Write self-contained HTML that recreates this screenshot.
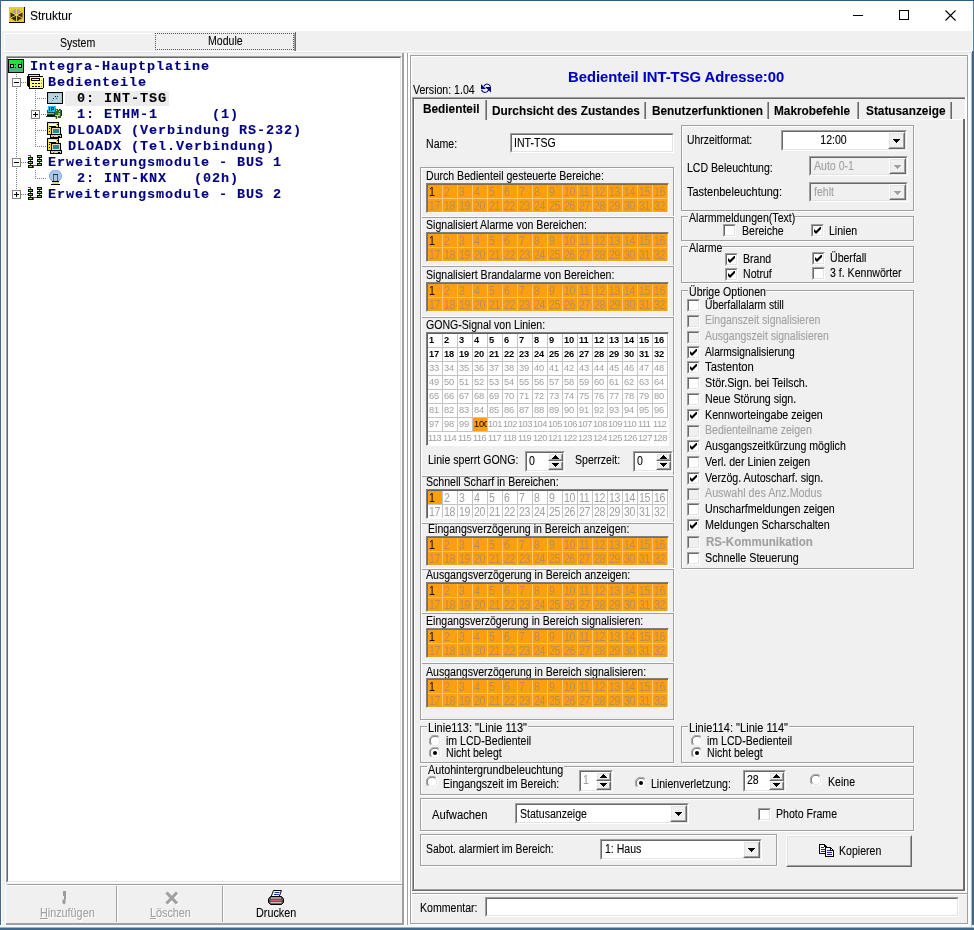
<!DOCTYPE html>
<html><head><meta charset="utf-8"><title>Struktur</title>
<style>
html,body{margin:0;padding:0;}
body{width:974px;height:930px;overflow:hidden;background:#f0f0f0;font-family:"Liberation Sans",sans-serif;font-size:12px;position:relative;}
#w div,#w span.t,#w svg.a{position:absolute;}
#w{position:absolute;left:0;top:0;width:974px;height:930px;overflow:hidden;will-change:transform;}
.t{white-space:pre;line-height:14px;transform-origin:0 0;display:block;-webkit-text-stroke:0.1px currentColor;}
.c{box-sizing:border-box;overflow:hidden;white-space:nowrap;}
.c span{display:inline-block;transform-origin:0 100%;padding-left:1px;}
</style></head><body><div id="w">
<div class="" style="left:0px;top:0px;width:974px;height:930px;background:#f0f0f0"></div>
<div class="" style="left:0px;top:0px;width:974px;height:31px;background:#fff"></div>
<div class="" style="left:0px;top:0px;width:974px;height:1px;background:#2c5a84"></div>
<div class="" style="left:0px;top:0px;width:1px;height:930px;background:#44688a"></div>
<div class="" style="left:1px;top:31px;width:1px;height:897px;background:#fff"></div>
<div class="" style="left:972px;top:51px;width:2px;height:879px;background:#3e688c"></div>
<div class="" style="left:972px;top:1px;width:1px;height:50px;background:#f4f8fc"></div>
<div class="" style="left:973px;top:1px;width:1px;height:50px;background:#4a86b8"></div>
<div class="" style="left:0px;top:925px;width:974px;height:2px;background:#fafafa"></div>
<div class="" style="left:971px;top:51px;width:1px;height:877px;background:#a9bac9"></div>
<div class="" style="left:0px;top:927px;width:974px;height:1px;background:#9fb2c3"></div>
<div class="" style="left:0px;top:928px;width:974px;height:2px;background:#3e688c"></div>
<svg class="a" style="left:9px;top:7px" width="16" height="16" viewBox="0 0 16 16"><rect x="0" y="0" width="16" height="16" fill="#e6cf1e"/><rect x="15" y="0" width="1" height="16" fill="#000"/><rect x="0" y="15" width="16" height="1" fill="#000"/><path d="M7.500 1.500L13.500 5 7.500 8.500 1.500 5z" fill="#b8a090"/><path d="M1.500 5L7.500 8.500V14.500L1.500 11z" fill="#3a2808"/><path d="M13.500 5L7.500 8.500V14.500L13.500 11z" fill="#4a3008"/><path d="M7.500 1V15M1.500 11L13.500 5M1.500 5L13.500 11" stroke="#e8d850" stroke-width="0.900" fill="none"/></svg>
<span class="t" style="left:30px;top:9px;font-size:12px;color:#000;transform:scaleX(1);">Struktur</span>
<div class="" style="left:853px;top:15px;width:10px;height:1px;background:#000"></div>
<div class="" style="left:899px;top:10px;width:10px;height:10px;border:1px solid #000;box-sizing:border-box"></div>
<svg class="a" style="left:945px;top:10px" width="11" height="11" viewBox="0 0 11 11"><path d="M0.5 0.5l10 10M10.5 0.5l-10 10" stroke="#000" stroke-width="1.1" fill="none"/></svg>
<span class="t" style="left:60px;top:36px;font-size:12px;color:#000;transform:scaleX(0.88);">System</span>
<div class="" style="left:155px;top:33px;width:139px;height:17px;border:1px dotted #555;box-sizing:border-box"></div>
<div class="" style="left:295px;top:32px;width:1px;height:19px;background:#696969"></div>
<div class="" style="left:294px;top:33px;width:1px;height:18px;background:#a0a0a0"></div>
<span class="t" style="left:208px;top:34px;font-size:12px;color:#000;transform:scaleX(0.88);">Module</span>
<div class="" style="left:4px;top:33px;width:150px;height:1px;background:#fff"></div>
<div class="" style="left:4px;top:33px;width:1px;height:18px;background:#fff"></div>
<div class="" style="left:6px;top:56px;width:396px;height:827px;background:#fff;box-sizing:border-box;border-top:1px solid #a0a0a0;border-left:1px solid #a0a0a0;border-right:1px solid #fff;border-bottom:1px solid #fff"></div>
<div class="" style="left:7px;top:57px;width:394px;height:825px;box-sizing:border-box;border-top:1px solid #696969;border-left:1px solid #696969;border-right:1px solid #e3e3e3;border-bottom:1px solid #e3e3e3"></div>
<div class="" style="left:65px;top:91px;width:104px;height:15px;background:#ececec"></div>
<span class="t" style="left:30px;top:59px;font-size:13.5px;color:#000080;font-weight:700;font-family:'Liberation Mono',monospace;transform:scaleX(1);line-height:16px;letter-spacing:0.9px;">Integra-Hauptplatine</span>
<span class="t" style="left:48px;top:75px;font-size:13.5px;color:#000080;font-weight:700;font-family:'Liberation Mono',monospace;transform:scaleX(1);line-height:16px;letter-spacing:0.9px;">Bedienteile</span>
<span class="t" style="left:77px;top:91px;font-size:13.5px;color:#000;font-weight:700;font-family:'Liberation Mono',monospace;transform:scaleX(1);line-height:16px;letter-spacing:0.9px;">0: INT-TSG</span>
<span class="t" style="left:77px;top:107px;font-size:13.5px;color:#000080;font-weight:700;font-family:'Liberation Mono',monospace;transform:scaleX(1);line-height:16px;letter-spacing:0.9px;">1: ETHM-1      (1)</span>
<span class="t" style="left:68px;top:123px;font-size:13.5px;color:#000080;font-weight:700;font-family:'Liberation Mono',monospace;transform:scaleX(1);line-height:16px;letter-spacing:0.9px;">DLOADX (Verbindung RS-232)</span>
<span class="t" style="left:68px;top:139px;font-size:13.5px;color:#000080;font-weight:700;font-family:'Liberation Mono',monospace;transform:scaleX(1);line-height:16px;letter-spacing:0.9px;">DLOADX (Tel.Verbindung)</span>
<span class="t" style="left:48px;top:155px;font-size:13.5px;color:#000080;font-weight:700;font-family:'Liberation Mono',monospace;transform:scaleX(1);line-height:16px;letter-spacing:0.9px;">Erweiterungsmodule - BUS 1</span>
<span class="t" style="left:77px;top:171px;font-size:13.5px;color:#000080;font-weight:700;font-family:'Liberation Mono',monospace;transform:scaleX(1);line-height:16px;letter-spacing:0.9px;">2: INT-KNX   (02h)</span>
<span class="t" style="left:48px;top:187px;font-size:13.5px;color:#000080;font-weight:700;font-family:'Liberation Mono',monospace;transform:scaleX(1);line-height:16px;letter-spacing:0.9px;">Erweiterungsmodule - BUS 2</span>
<div class="" style="left:16px;top:74px;width:1px;height:117px;background:repeating-linear-gradient(to bottom,#808080 0,#808080 1px,transparent 1px,transparent 2px)"></div>
<div class="" style="left:21px;top:82px;width:7px;height:1px;background:repeating-linear-gradient(to right,#808080 0,#808080 1px,transparent 1px,transparent 2px)"></div>
<div class="" style="left:21px;top:162px;width:7px;height:1px;background:repeating-linear-gradient(to right,#808080 0,#808080 1px,transparent 1px,transparent 2px)"></div>
<div class="" style="left:21px;top:194px;width:7px;height:1px;background:repeating-linear-gradient(to right,#808080 0,#808080 1px,transparent 1px,transparent 2px)"></div>
<div class="" style="left:35px;top:90px;width:1px;height:57px;background:repeating-linear-gradient(to bottom,#808080 0,#808080 1px,transparent 1px,transparent 2px)"></div>
<div class="" style="left:37px;top:98px;width:9px;height:1px;background:repeating-linear-gradient(to right,#808080 0,#808080 1px,transparent 1px,transparent 2px)"></div>
<div class="" style="left:41px;top:114px;width:5px;height:1px;background:repeating-linear-gradient(to right,#808080 0,#808080 1px,transparent 1px,transparent 2px)"></div>
<div class="" style="left:37px;top:130px;width:9px;height:1px;background:repeating-linear-gradient(to right,#808080 0,#808080 1px,transparent 1px,transparent 2px)"></div>
<div class="" style="left:37px;top:146px;width:9px;height:1px;background:repeating-linear-gradient(to right,#808080 0,#808080 1px,transparent 1px,transparent 2px)"></div>
<div class="" style="left:35px;top:170px;width:1px;height:9px;background:repeating-linear-gradient(to bottom,#808080 0,#808080 1px,transparent 1px,transparent 2px)"></div>
<div class="" style="left:37px;top:178px;width:9px;height:1px;background:repeating-linear-gradient(to right,#808080 0,#808080 1px,transparent 1px,transparent 2px)"></div>
<div class="" style="left:12px;top:78px;width:9px;height:9px;background:#fff;border:1px solid #808080;box-sizing:border-box"></div>
<div class="" style="left:14px;top:82px;width:5px;height:1px;background:#000"></div>
<div class="" style="left:31px;top:110px;width:9px;height:9px;background:#fff;border:1px solid #808080;box-sizing:border-box"></div>
<div class="" style="left:33px;top:114px;width:5px;height:1px;background:#000"></div>
<div class="" style="left:35px;top:112px;width:1px;height:5px;background:#000"></div>
<div class="" style="left:12px;top:158px;width:9px;height:9px;background:#fff;border:1px solid #808080;box-sizing:border-box"></div>
<div class="" style="left:14px;top:162px;width:5px;height:1px;background:#000"></div>
<div class="" style="left:12px;top:190px;width:9px;height:9px;background:#fff;border:1px solid #808080;box-sizing:border-box"></div>
<div class="" style="left:14px;top:194px;width:5px;height:1px;background:#000"></div>
<div class="" style="left:16px;top:192px;width:1px;height:5px;background:#000"></div>
<svg class="a" style="left:8px;top:59px" width="16" height="14" viewBox="0 0 16 14" shape-rendering="crispEdges"><rect x="0" y="0" width="16" height="14" fill="#000"/><rect x="1" y="1" width="14" height="8" fill="#22e040"/><rect x="1" y="9" width="14" height="4" fill="#48b880"/><rect x="2" y="5" width="4" height="4" fill="#000"/><rect x="3" y="6" width="2" height="2" fill="#a0d8a0"/><rect x="10" y="5" width="4" height="4" fill="#000"/><rect x="11" y="6" width="2" height="2" fill="#a0d8a0"/><rect x="7" y="5" width="1" height="1" fill="#000"/><rect x="7" y="8" width="1" height="1" fill="#000"/><rect x="13" y="2" width="1" height="3" fill="#c03010"/></svg>
<svg class="a" style="left:27px;top:74px" width="17" height="16" viewBox="0 0 17 16" shape-rendering="crispEdges"><rect x="1" y="0" width="12" height="13" fill="#000"/><rect x="2" y="1" width="10" height="11" fill="#f4f49a"/><rect x="0" y="2" width="1" height="10" fill="#000"/><rect x="2" y="2" width="14" height="13" fill="#000"/><rect x="3" y="3" width="12" height="11" fill="#ffff8c"/><rect x="15" y="3" width="1" height="1" fill="#ffff8c"/><rect x="16" y="4" width="1" height="10" fill="#000"/><rect x="15" y="4" width="1" height="10" fill="#ffff8c"/><rect x="4" y="4" width="9" height="3" fill="#000"/><rect x="5" y="5" width="7" height="1" fill="#ffff8c"/><rect x="5" y="9" width="2" height="1" fill="#000"/><rect x="8" y="9" width="2" height="1" fill="#000"/><rect x="11" y="9" width="2" height="1" fill="#000"/><rect x="5" y="12" width="2" height="1" fill="#000"/><rect x="8" y="12" width="2" height="1" fill="#000"/><rect x="11" y="12" width="2" height="1" fill="#000"/><rect x="14" y="6" width="1" height="1" fill="#a09820"/><rect x="14" y="9" width="1" height="1" fill="#a09820"/><rect x="14" y="12" width="1" height="1" fill="#a09820"/></svg>
<svg class="a" style="left:47px;top:92px" width="16" height="12" viewBox="0 0 16 12" shape-rendering="crispEdges"><rect x="0" y="0" width="16" height="12" fill="#000"/><rect x="1" y="1" width="14" height="10" fill="#a9c4cc"/><rect x="2" y="2" width="12" height="8" fill="#b8d4dc"/><rect x="8" y="4" width="1" height="1" fill="#000"/><rect x="10" y="4" width="1" height="1" fill="#204060"/><rect x="6" y="6" width="1" height="1" fill="#000"/><rect x="9" y="6" width="1" height="1" fill="#406080"/><rect x="5" y="8" width="1" height="1" fill="#6090a0"/></svg>
<svg class="a" style="left:46px;top:106px" width="17" height="14" viewBox="0 0 17 14" shape-rendering="crispEdges"><rect x="1" y="4" width="13" height="7" fill="#205030"/><rect x="2" y="0" width="8" height="6" fill="#20c8e8"/><rect x="3" y="1" width="1" height="4" fill="#003080"/><rect x="5" y="1" width="1" height="4" fill="#003080"/><rect x="6" y="1" width="2" height="1" fill="#003080"/><rect x="7" y="2" width="1" height="1" fill="#003080"/><rect x="6" y="3" width="2" height="1" fill="#003080"/><rect x="1" y="7" width="7" height="1" fill="#90b098"/><rect x="1" y="9" width="8" height="1" fill="#000"/><rect x="9" y="3" width="6" height="9" fill="#306838"/><rect x="10" y="4" width="1" height="1" fill="#c8e860"/><rect x="12" y="3" width="1" height="1" fill="#c8e860"/><rect x="13" y="5" width="1" height="1" fill="#c8e860"/><rect x="9" y="9" width="3" height="4" fill="#d8e040"/><rect x="10" y="10" width="1" height="3" fill="#405020"/><rect x="12" y="7" width="2" height="3" fill="#98d048"/><rect x="15" y="4" width="1" height="6" fill="#183820"/><rect x="0" y="10" width="10" height="1" fill="#102818"/></svg>
<svg class="a" style="left:46px;top:122px" width="16" height="16" viewBox="0 0 16 16" shape-rendering="crispEdges"><rect x="1" y="0" width="12" height="13" fill="#000"/><rect x="2" y="1" width="10" height="11" fill="#f0e040"/><rect x="3" y="2" width="7" height="2" fill="#fff"/><rect x="3" y="4" width="7" height="1" fill="#000"/><rect x="11" y="2" width="1" height="1" fill="#000"/><rect x="3" y="6" width="1" height="1" fill="#000"/><rect x="3" y="9" width="1" height="1" fill="#000"/><rect x="5" y="5" width="10" height="8" fill="#000"/><rect x="6" y="6" width="8" height="6" fill="#d8d8c0"/><rect x="7" y="7" width="6" height="4" fill="#209090"/><rect x="4" y="12" width="12" height="4" fill="#000"/><rect x="5" y="13" width="10" height="2" fill="#d0d0b8"/><rect x="7" y="14" width="1" height="1" fill="#c04040"/><rect x="12" y="14" width="2" height="1" fill="#000"/></svg>
<svg class="a" style="left:46px;top:138px" width="16" height="16" viewBox="0 0 16 16" shape-rendering="crispEdges"><rect x="1" y="0" width="12" height="13" fill="#000"/><rect x="2" y="1" width="10" height="11" fill="#f0e040"/><rect x="3" y="2" width="7" height="2" fill="#fff"/><rect x="3" y="4" width="7" height="1" fill="#000"/><rect x="11" y="2" width="1" height="1" fill="#000"/><rect x="3" y="6" width="1" height="1" fill="#000"/><rect x="3" y="9" width="1" height="1" fill="#000"/><rect x="5" y="5" width="10" height="8" fill="#000"/><rect x="6" y="6" width="8" height="6" fill="#d8d8c0"/><rect x="7" y="7" width="6" height="4" fill="#209090"/><rect x="4" y="12" width="12" height="4" fill="#000"/><rect x="5" y="13" width="10" height="2" fill="#d0d0b8"/><rect x="7" y="14" width="1" height="1" fill="#c04040"/><rect x="12" y="14" width="2" height="1" fill="#000"/></svg>
<svg class="a" style="left:27px;top:154px" width="16" height="15" viewBox="0 0 16 15" shape-rendering="crispEdges"><path d="M0.500 1.500h3v12h3v-2h3" fill="none" stroke="#d02020" stroke-width="1"/><path d="M3.500 2v10M12.500 2v9" stroke="#702020" stroke-width="1" fill="none"/><rect x="1" y="3" width="5" height="3" fill="#000"/><rect x="2" y="4" width="3" height="1" fill="#70d050"/><rect x="1" y="7" width="5" height="3" fill="#000"/><rect x="2" y="8" width="3" height="1" fill="#70d050"/><rect x="1" y="11" width="5" height="3" fill="#000"/><rect x="2" y="12" width="3" height="1" fill="#70d050"/><rect x="10" y="1" width="5" height="3" fill="#000"/><rect x="11" y="2" width="3" height="1" fill="#70d050"/><rect x="10" y="5" width="5" height="3" fill="#000"/><rect x="11" y="6" width="3" height="1" fill="#70d050"/><rect x="10" y="9" width="5" height="3" fill="#000"/><rect x="11" y="10" width="3" height="1" fill="#70d050"/></svg>
<svg class="a" style="left:27px;top:186px" width="16" height="15" viewBox="0 0 16 15" shape-rendering="crispEdges"><path d="M0.500 1.500h3v12h3v-2h3" fill="none" stroke="#d02020" stroke-width="1"/><path d="M3.500 2v10M12.500 2v9" stroke="#702020" stroke-width="1" fill="none"/><rect x="1" y="3" width="5" height="3" fill="#000"/><rect x="2" y="4" width="3" height="1" fill="#70d050"/><rect x="1" y="7" width="5" height="3" fill="#000"/><rect x="2" y="8" width="3" height="1" fill="#70d050"/><rect x="1" y="11" width="5" height="3" fill="#000"/><rect x="2" y="12" width="3" height="1" fill="#70d050"/><rect x="10" y="1" width="5" height="3" fill="#000"/><rect x="11" y="2" width="3" height="1" fill="#70d050"/><rect x="10" y="5" width="5" height="3" fill="#000"/><rect x="11" y="6" width="3" height="1" fill="#70d050"/><rect x="10" y="9" width="5" height="3" fill="#000"/><rect x="11" y="10" width="3" height="1" fill="#70d050"/></svg>
<svg class="a" style="left:48px;top:170px" width="15" height="16" viewBox="0 0 15 16"><circle cx="7.500" cy="6" r="6" fill="#a8c8ec" stroke="#88a8d0" stroke-width="1"/><path d="M5.500 5v7M9.500 5v7" stroke="#506070" stroke-width="1" fill="none"/><rect x="5" y="4" width="5" height="1" fill="#203040"/><rect x="4" y="11" width="7" height="2" fill="#d8d8a0"/><rect x="4" y="11" width="7" height="1" fill="#000"/><rect x="4" y="13" width="7" height="1" fill="#e8e070"/><rect x="3" y="14" width="9" height="1" fill="#000"/></svg>
<div class="" style="left:7px;top:884px;width:397px;height:1px;background:#a0a0a0"></div>
<div class="" style="left:7px;top:885px;width:396px;height:1px;background:#fff"></div>
<div class="" style="left:6px;top:923px;width:398px;height:2px;background:#a0a0a0"></div>
<div class="" style="left:5px;top:53px;width:1px;height:870px;background:#fff"></div>
<div class="" style="left:116px;top:886px;width:1px;height:36px;background:#a0a0a0"></div>
<div class="" style="left:117px;top:886px;width:1px;height:36px;background:#fff"></div>
<div class="" style="left:222px;top:886px;width:1px;height:36px;background:#a0a0a0"></div>
<div class="" style="left:223px;top:886px;width:1px;height:36px;background:#fff"></div>
<span class="t" style="left:41px;top:907px;font-size:12px;color:#fff;transform:scaleX(0.9);"><u>H</u>inzufügen</span>
<span class="t" style="left:40px;top:906px;font-size:12px;color:#a0a0a0;transform:scaleX(0.9);"><u>H</u>inzufügen</span>
<span class="t" style="left:151px;top:907px;font-size:12px;color:#fff;transform:scaleX(0.9);"><u>L</u>öschen</span>
<span class="t" style="left:150px;top:906px;font-size:12px;color:#a0a0a0;transform:scaleX(0.9);"><u>L</u>öschen</span>
<span class="t" style="left:256px;top:906px;font-size:12px;color:#000;transform:scaleX(0.9);">Drucken</span>
<svg class="a" style="left:61px;top:891px" width="6" height="14" viewBox="0 0 6 14"><path d="M2 0h3v8h-0.500v4l-1.500 1.500-1.500-1.500v-3.500h1.500v-3.500h-1z" fill="#9a9a9a"/></svg>
<svg class="a" style="left:165px;top:891px" width="15" height="15" viewBox="0 0 15 15"><path d="M2.500 2.500l10.500 11M13 2.500l-10.500 11" stroke="#fff" stroke-width="3.200" fill="none"/><path d="M1.500 1.500l10.500 11M12 1.500l-10.500 11" stroke="#a0a0a0" stroke-width="3.200" fill="none"/></svg>
<svg class="a" style="left:267px;top:890px" width="18" height="16" viewBox="0 0 18 16"><path d="M6.500 0.500h8l-2.500 6.500h-8z" fill="#fff" stroke="#000" stroke-width="1"/><path d="M7.500 2.500h5M6.800 4.500h5" stroke="#2030d0" stroke-width="1.200"/><path d="M3.500 6.500h11l2 2.500v3.500l-2 2h-11l-2-2v-3.500z" fill="#505050" stroke="#000" stroke-width="1"/><path d="M4 8h10" stroke="#c8c8c8" stroke-width="1.200"/><path d="M3.500 10.500h11" stroke="#e05858" stroke-width="1.600"/><path d="M3.500 12.700h11" stroke="#d8d8d8" stroke-width="1"/></svg>
<div class="" style="left:2px;top:51px;width:970px;height:1px;background:#fff"></div>
<div class="" style="left:2px;top:52px;width:970px;height:1px;background:#e3e3e3"></div>
<div class="" style="left:402px;top:53px;width:1px;height:870px;background:#a0a0a0"></div>
<div class="" style="left:403px;top:53px;width:1px;height:870px;background:#a0a0a0"></div>
<div class="" style="left:404px;top:53px;width:3px;height:872px;background:#fff"></div>
<div class="" style="left:407px;top:53px;width:1px;height:872px;background:#a0a0a0"></div>
<div class="" style="left:408px;top:53px;width:2px;height:872px;background:#fff"></div>
<div class="" style="left:411px;top:56px;width:558px;height:869px;border:1px solid #fff;box-sizing:border-box"></div>
<div class="" style="left:410px;top:55px;width:558px;height:869px;border:1px solid #a0a0a0;box-sizing:border-box"></div>
<div class="" style="left:968px;top:53px;width:3px;height:872px;background:#fafafa"></div>
<span class="t" style="left:568px;top:68px;font-size:15px;color:#0000c0;font-weight:700;transform:scaleX(0.985);line-height:17px;">Bedienteil INT-TSG Adresse:00</span>
<span class="t" style="left:413px;top:83px;font-size:12px;color:#000;transform:scaleX(0.88);">Version: 1.04</span>
<svg class="a" style="left:481px;top:83px" width="11" height="11" viewBox="0 0 11 11"><path d="M0 1L0 6L5 6Z M4.200 4L10 4L10 9.500Z" fill="#000080"/><path d="M3 3.200C4.200 0.800 7.500 -0.300 9.600 3.800M0.400 6.800C2 10 5.500 10.600 7.600 7" stroke="#000080" stroke-width="1.100" fill="none"/></svg>
<div class="" style="left:412px;top:97px;width:553px;height:1px;background:#a0a0a0"></div>
<div class="" style="left:413px;top:98px;width:552px;height:1px;background:#696969"></div>
<div class="" style="left:412px;top:97px;width:1px;height:794px;background:#a0a0a0"></div>
<div class="" style="left:413px;top:98px;width:1px;height:793px;background:#696969"></div>
<div class="" style="left:413px;top:889px;width:552px;height:1px;background:#a0a0a0"></div>
<div class="" style="left:412px;top:890px;width:553px;height:1px;background:#696969"></div>
<div class="" style="left:963px;top:119px;width:1px;height:771px;background:#707070"></div>
<div class="" style="left:964px;top:119px;width:1px;height:772px;background:#696969"></div>
<div class="" style="left:965px;top:97px;width:2px;height:795px;background:#fff"></div>
<div class="" style="left:412px;top:891px;width:555px;height:1px;background:#fff"></div>
<div class="" style="left:414px;top:99px;width:1px;height:790px;background:#fff"></div>
<div class="" style="left:487px;top:119px;width:476px;height:1px;background:#fff"></div>
<div class="" style="left:486px;top:100px;width:1px;height:20px;background:#696969"></div>
<div class="" style="left:485px;top:100px;width:1px;height:20px;background:#a0a0a0"></div>
<span class="t" style="left:423px;top:102px;font-size:12px;color:#000;font-weight:700;transform:scaleX(0.9853);">Bedienteil</span>
<div class="" style="left:645px;top:102px;width:1px;height:17px;background:#696969"></div>
<div class="" style="left:644px;top:102px;width:1px;height:17px;background:#a0a0a0"></div>
<span class="t" style="left:492px;top:104px;font-size:12px;color:#000;font-weight:700;transform:scaleX(0.985);">Durchsicht des Zustandes</span>
<div class="" style="left:768px;top:102px;width:1px;height:17px;background:#696969"></div>
<div class="" style="left:767px;top:102px;width:1px;height:17px;background:#a0a0a0"></div>
<span class="t" style="left:652px;top:104px;font-size:12px;color:#000;font-weight:700;transform:scaleX(0.985);">Benutzerfunktionen</span>
<div class="" style="left:858px;top:102px;width:1px;height:17px;background:#696969"></div>
<div class="" style="left:857px;top:102px;width:1px;height:17px;background:#a0a0a0"></div>
<span class="t" style="left:774px;top:104px;font-size:12px;color:#000;font-weight:700;transform:scaleX(0.985);">Makrobefehle</span>
<div class="" style="left:951px;top:102px;width:1px;height:17px;background:#696969"></div>
<div class="" style="left:950px;top:102px;width:1px;height:17px;background:#a0a0a0"></div>
<span class="t" style="left:865.5px;top:104px;font-size:12px;color:#000;font-weight:700;transform:scaleX(0.985);">Statusanzeige</span>
<span class="t" style="left:426px;top:137px;font-size:12px;color:#000;transform:scaleX(0.88);">Name:</span>
<div class="" style="left:510px;top:133px;width:164px;height:20px;background:#fff;box-sizing:border-box;border-top:1px solid #a0a0a0;border-left:1px solid #a0a0a0;border-right:1px solid #fff;border-bottom:1px solid #fff"></div>
<div class="" style="left:511px;top:134px;width:162px;height:18px;box-sizing:border-box;border-top:1px solid #696969;border-left:1px solid #696969;border-right:1px solid #e3e3e3;border-bottom:1px solid #e3e3e3"></div>
<span class="t" style="left:514px;top:136px;font-size:12px;color:#000;transform:scaleX(0.88);">INT-TSG</span>
<div class="" style="left:421px;top:168px;width:254px;height:553px;border:1px solid #fff;box-sizing:border-box"></div>
<div class="" style="left:420px;top:167px;width:254px;height:553px;border:1px solid #a0a0a0;box-sizing:border-box"></div>
<span class="t" style="left:426px;top:169px;font-size:12px;color:#000;transform:scaleX(0.88);">Durch Bedienteil gesteuerte Bereiche:</span>
<div class="" style="left:426px;top:183px;width:243px;height:30px;background:#ff9f10;box-sizing:border-box;border-top:1px solid #808080;border-left:1px solid #808080;border-right:1px solid #fff;border-bottom:1px solid #fff"></div>
<div class="" style="left:427px;top:184px;width:241px;height:28px;box-sizing:border-box;border-top:1px solid #8a6a3a;border-left:1px solid #8a6a3a;"></div>
<div class="" style="left:428px;top:185px;width:240px;height:27px;overflow:hidden"><div class="c" style="left:0px;top:0px;width:15px;height:14px;font-size:12px;line-height:14px;color:#000;border-right:1px solid #ffc46c;border-bottom:1px solid #ffc46c"><span style="letter-spacing:-0.3px;transform:scaleX(.88)">1</span></div><div class="c" style="left:15px;top:0px;width:15px;height:14px;font-size:12px;line-height:14px;color:#b48e58;border-right:1px solid #ffc46c;border-bottom:1px solid #ffc46c"><span style="letter-spacing:-0.3px;transform:scaleX(.88)">2</span></div><div class="c" style="left:30px;top:0px;width:15px;height:14px;font-size:12px;line-height:14px;color:#b48e58;border-right:1px solid #ffc46c;border-bottom:1px solid #ffc46c"><span style="letter-spacing:-0.3px;transform:scaleX(.88)">3</span></div><div class="c" style="left:45px;top:0px;width:15px;height:14px;font-size:12px;line-height:14px;color:#b48e58;border-right:1px solid #ffc46c;border-bottom:1px solid #ffc46c"><span style="letter-spacing:-0.3px;transform:scaleX(.88)">4</span></div><div class="c" style="left:60px;top:0px;width:15px;height:14px;font-size:12px;line-height:14px;color:#b48e58;border-right:1px solid #ffc46c;border-bottom:1px solid #ffc46c"><span style="letter-spacing:-0.3px;transform:scaleX(.88)">5</span></div><div class="c" style="left:75px;top:0px;width:15px;height:14px;font-size:12px;line-height:14px;color:#b48e58;border-right:1px solid #ffc46c;border-bottom:1px solid #ffc46c"><span style="letter-spacing:-0.3px;transform:scaleX(.88)">6</span></div><div class="c" style="left:90px;top:0px;width:15px;height:14px;font-size:12px;line-height:14px;color:#b48e58;border-right:1px solid #ffc46c;border-bottom:1px solid #ffc46c"><span style="letter-spacing:-0.3px;transform:scaleX(.88)">7</span></div><div class="c" style="left:105px;top:0px;width:15px;height:14px;font-size:12px;line-height:14px;color:#b48e58;border-right:1px solid #ffc46c;border-bottom:1px solid #ffc46c"><span style="letter-spacing:-0.3px;transform:scaleX(.88)">8</span></div><div class="c" style="left:120px;top:0px;width:15px;height:14px;font-size:12px;line-height:14px;color:#b48e58;border-right:1px solid #ffc46c;border-bottom:1px solid #ffc46c"><span style="letter-spacing:-0.3px;transform:scaleX(.88)">9</span></div><div class="c" style="left:135px;top:0px;width:15px;height:14px;font-size:12px;line-height:14px;color:#b48e58;border-right:1px solid #ffc46c;border-bottom:1px solid #ffc46c"><span style="letter-spacing:-0.3px;transform:scaleX(.88)">10</span></div><div class="c" style="left:150px;top:0px;width:15px;height:14px;font-size:12px;line-height:14px;color:#b48e58;border-right:1px solid #ffc46c;border-bottom:1px solid #ffc46c"><span style="letter-spacing:-0.3px;transform:scaleX(.88)">11</span></div><div class="c" style="left:165px;top:0px;width:15px;height:14px;font-size:12px;line-height:14px;color:#b48e58;border-right:1px solid #ffc46c;border-bottom:1px solid #ffc46c"><span style="letter-spacing:-0.3px;transform:scaleX(.88)">12</span></div><div class="c" style="left:180px;top:0px;width:15px;height:14px;font-size:12px;line-height:14px;color:#b48e58;border-right:1px solid #ffc46c;border-bottom:1px solid #ffc46c"><span style="letter-spacing:-0.3px;transform:scaleX(.88)">13</span></div><div class="c" style="left:195px;top:0px;width:15px;height:14px;font-size:12px;line-height:14px;color:#b48e58;border-right:1px solid #ffc46c;border-bottom:1px solid #ffc46c"><span style="letter-spacing:-0.3px;transform:scaleX(.88)">14</span></div><div class="c" style="left:210px;top:0px;width:15px;height:14px;font-size:12px;line-height:14px;color:#b48e58;border-right:1px solid #ffc46c;border-bottom:1px solid #ffc46c"><span style="letter-spacing:-0.3px;transform:scaleX(.88)">15</span></div><div class="c" style="left:225px;top:0px;width:15px;height:14px;font-size:12px;line-height:14px;color:#b48e58;border-right:1px solid #ffc46c;border-bottom:1px solid #ffc46c"><span style="letter-spacing:-0.3px;transform:scaleX(.88)">16</span></div><div class="c" style="left:0px;top:14px;width:15px;height:14px;font-size:12px;line-height:14px;color:#b48e58;border-right:1px solid #ffc46c;border-bottom:1px solid #ffc46c"><span style="letter-spacing:-0.3px;transform:scaleX(.88)">17</span></div><div class="c" style="left:15px;top:14px;width:15px;height:14px;font-size:12px;line-height:14px;color:#b48e58;border-right:1px solid #ffc46c;border-bottom:1px solid #ffc46c"><span style="letter-spacing:-0.3px;transform:scaleX(.88)">18</span></div><div class="c" style="left:30px;top:14px;width:15px;height:14px;font-size:12px;line-height:14px;color:#b48e58;border-right:1px solid #ffc46c;border-bottom:1px solid #ffc46c"><span style="letter-spacing:-0.3px;transform:scaleX(.88)">19</span></div><div class="c" style="left:45px;top:14px;width:15px;height:14px;font-size:12px;line-height:14px;color:#b48e58;border-right:1px solid #ffc46c;border-bottom:1px solid #ffc46c"><span style="letter-spacing:-0.3px;transform:scaleX(.88)">20</span></div><div class="c" style="left:60px;top:14px;width:15px;height:14px;font-size:12px;line-height:14px;color:#b48e58;border-right:1px solid #ffc46c;border-bottom:1px solid #ffc46c"><span style="letter-spacing:-0.3px;transform:scaleX(.88)">21</span></div><div class="c" style="left:75px;top:14px;width:15px;height:14px;font-size:12px;line-height:14px;color:#b48e58;border-right:1px solid #ffc46c;border-bottom:1px solid #ffc46c"><span style="letter-spacing:-0.3px;transform:scaleX(.88)">22</span></div><div class="c" style="left:90px;top:14px;width:15px;height:14px;font-size:12px;line-height:14px;color:#b48e58;border-right:1px solid #ffc46c;border-bottom:1px solid #ffc46c"><span style="letter-spacing:-0.3px;transform:scaleX(.88)">23</span></div><div class="c" style="left:105px;top:14px;width:15px;height:14px;font-size:12px;line-height:14px;color:#b48e58;border-right:1px solid #ffc46c;border-bottom:1px solid #ffc46c"><span style="letter-spacing:-0.3px;transform:scaleX(.88)">24</span></div><div class="c" style="left:120px;top:14px;width:15px;height:14px;font-size:12px;line-height:14px;color:#b48e58;border-right:1px solid #ffc46c;border-bottom:1px solid #ffc46c"><span style="letter-spacing:-0.3px;transform:scaleX(.88)">25</span></div><div class="c" style="left:135px;top:14px;width:15px;height:14px;font-size:12px;line-height:14px;color:#b48e58;border-right:1px solid #ffc46c;border-bottom:1px solid #ffc46c"><span style="letter-spacing:-0.3px;transform:scaleX(.88)">26</span></div><div class="c" style="left:150px;top:14px;width:15px;height:14px;font-size:12px;line-height:14px;color:#b48e58;border-right:1px solid #ffc46c;border-bottom:1px solid #ffc46c"><span style="letter-spacing:-0.3px;transform:scaleX(.88)">27</span></div><div class="c" style="left:165px;top:14px;width:15px;height:14px;font-size:12px;line-height:14px;color:#b48e58;border-right:1px solid #ffc46c;border-bottom:1px solid #ffc46c"><span style="letter-spacing:-0.3px;transform:scaleX(.88)">28</span></div><div class="c" style="left:180px;top:14px;width:15px;height:14px;font-size:12px;line-height:14px;color:#b48e58;border-right:1px solid #ffc46c;border-bottom:1px solid #ffc46c"><span style="letter-spacing:-0.3px;transform:scaleX(.88)">29</span></div><div class="c" style="left:195px;top:14px;width:15px;height:14px;font-size:12px;line-height:14px;color:#b48e58;border-right:1px solid #ffc46c;border-bottom:1px solid #ffc46c"><span style="letter-spacing:-0.3px;transform:scaleX(.88)">30</span></div><div class="c" style="left:210px;top:14px;width:15px;height:14px;font-size:12px;line-height:14px;color:#b48e58;border-right:1px solid #ffc46c;border-bottom:1px solid #ffc46c"><span style="letter-spacing:-0.3px;transform:scaleX(.88)">31</span></div><div class="c" style="left:225px;top:14px;width:15px;height:14px;font-size:12px;line-height:14px;color:#b48e58;border-right:1px solid #ffc46c;border-bottom:1px solid #ffc46c"><span style="letter-spacing:-0.3px;transform:scaleX(.88)">32</span></div></div>
<div class="" style="left:422px;top:216px;width:252px;height:1px;background:#fff"></div>
<div class="" style="left:422px;top:217px;width:252px;height:1px;background:#a0a0a0"></div>
<span class="t" style="left:426px;top:218px;font-size:12px;color:#000;transform:scaleX(0.88);">Signalisiert Alarme von Bereichen:</span>
<div class="" style="left:426px;top:232px;width:243px;height:30px;background:#ff9f10;box-sizing:border-box;border-top:1px solid #808080;border-left:1px solid #808080;border-right:1px solid #fff;border-bottom:1px solid #fff"></div>
<div class="" style="left:427px;top:233px;width:241px;height:28px;box-sizing:border-box;border-top:1px solid #8a6a3a;border-left:1px solid #8a6a3a;"></div>
<div class="" style="left:428px;top:234px;width:240px;height:27px;overflow:hidden"><div class="c" style="left:0px;top:0px;width:15px;height:14px;font-size:12px;line-height:14px;color:#000;border-right:1px solid #ffc46c;border-bottom:1px solid #ffc46c"><span style="letter-spacing:-0.3px;transform:scaleX(.88)">1</span></div><div class="c" style="left:15px;top:0px;width:15px;height:14px;font-size:12px;line-height:14px;color:#b48e58;border-right:1px solid #ffc46c;border-bottom:1px solid #ffc46c"><span style="letter-spacing:-0.3px;transform:scaleX(.88)">2</span></div><div class="c" style="left:30px;top:0px;width:15px;height:14px;font-size:12px;line-height:14px;color:#b48e58;border-right:1px solid #ffc46c;border-bottom:1px solid #ffc46c"><span style="letter-spacing:-0.3px;transform:scaleX(.88)">3</span></div><div class="c" style="left:45px;top:0px;width:15px;height:14px;font-size:12px;line-height:14px;color:#b48e58;border-right:1px solid #ffc46c;border-bottom:1px solid #ffc46c"><span style="letter-spacing:-0.3px;transform:scaleX(.88)">4</span></div><div class="c" style="left:60px;top:0px;width:15px;height:14px;font-size:12px;line-height:14px;color:#b48e58;border-right:1px solid #ffc46c;border-bottom:1px solid #ffc46c"><span style="letter-spacing:-0.3px;transform:scaleX(.88)">5</span></div><div class="c" style="left:75px;top:0px;width:15px;height:14px;font-size:12px;line-height:14px;color:#b48e58;border-right:1px solid #ffc46c;border-bottom:1px solid #ffc46c"><span style="letter-spacing:-0.3px;transform:scaleX(.88)">6</span></div><div class="c" style="left:90px;top:0px;width:15px;height:14px;font-size:12px;line-height:14px;color:#b48e58;border-right:1px solid #ffc46c;border-bottom:1px solid #ffc46c"><span style="letter-spacing:-0.3px;transform:scaleX(.88)">7</span></div><div class="c" style="left:105px;top:0px;width:15px;height:14px;font-size:12px;line-height:14px;color:#b48e58;border-right:1px solid #ffc46c;border-bottom:1px solid #ffc46c"><span style="letter-spacing:-0.3px;transform:scaleX(.88)">8</span></div><div class="c" style="left:120px;top:0px;width:15px;height:14px;font-size:12px;line-height:14px;color:#b48e58;border-right:1px solid #ffc46c;border-bottom:1px solid #ffc46c"><span style="letter-spacing:-0.3px;transform:scaleX(.88)">9</span></div><div class="c" style="left:135px;top:0px;width:15px;height:14px;font-size:12px;line-height:14px;color:#b48e58;border-right:1px solid #ffc46c;border-bottom:1px solid #ffc46c"><span style="letter-spacing:-0.3px;transform:scaleX(.88)">10</span></div><div class="c" style="left:150px;top:0px;width:15px;height:14px;font-size:12px;line-height:14px;color:#b48e58;border-right:1px solid #ffc46c;border-bottom:1px solid #ffc46c"><span style="letter-spacing:-0.3px;transform:scaleX(.88)">11</span></div><div class="c" style="left:165px;top:0px;width:15px;height:14px;font-size:12px;line-height:14px;color:#b48e58;border-right:1px solid #ffc46c;border-bottom:1px solid #ffc46c"><span style="letter-spacing:-0.3px;transform:scaleX(.88)">12</span></div><div class="c" style="left:180px;top:0px;width:15px;height:14px;font-size:12px;line-height:14px;color:#b48e58;border-right:1px solid #ffc46c;border-bottom:1px solid #ffc46c"><span style="letter-spacing:-0.3px;transform:scaleX(.88)">13</span></div><div class="c" style="left:195px;top:0px;width:15px;height:14px;font-size:12px;line-height:14px;color:#b48e58;border-right:1px solid #ffc46c;border-bottom:1px solid #ffc46c"><span style="letter-spacing:-0.3px;transform:scaleX(.88)">14</span></div><div class="c" style="left:210px;top:0px;width:15px;height:14px;font-size:12px;line-height:14px;color:#b48e58;border-right:1px solid #ffc46c;border-bottom:1px solid #ffc46c"><span style="letter-spacing:-0.3px;transform:scaleX(.88)">15</span></div><div class="c" style="left:225px;top:0px;width:15px;height:14px;font-size:12px;line-height:14px;color:#b48e58;border-right:1px solid #ffc46c;border-bottom:1px solid #ffc46c"><span style="letter-spacing:-0.3px;transform:scaleX(.88)">16</span></div><div class="c" style="left:0px;top:14px;width:15px;height:14px;font-size:12px;line-height:14px;color:#b48e58;border-right:1px solid #ffc46c;border-bottom:1px solid #ffc46c"><span style="letter-spacing:-0.3px;transform:scaleX(.88)">17</span></div><div class="c" style="left:15px;top:14px;width:15px;height:14px;font-size:12px;line-height:14px;color:#b48e58;border-right:1px solid #ffc46c;border-bottom:1px solid #ffc46c"><span style="letter-spacing:-0.3px;transform:scaleX(.88)">18</span></div><div class="c" style="left:30px;top:14px;width:15px;height:14px;font-size:12px;line-height:14px;color:#b48e58;border-right:1px solid #ffc46c;border-bottom:1px solid #ffc46c"><span style="letter-spacing:-0.3px;transform:scaleX(.88)">19</span></div><div class="c" style="left:45px;top:14px;width:15px;height:14px;font-size:12px;line-height:14px;color:#b48e58;border-right:1px solid #ffc46c;border-bottom:1px solid #ffc46c"><span style="letter-spacing:-0.3px;transform:scaleX(.88)">20</span></div><div class="c" style="left:60px;top:14px;width:15px;height:14px;font-size:12px;line-height:14px;color:#b48e58;border-right:1px solid #ffc46c;border-bottom:1px solid #ffc46c"><span style="letter-spacing:-0.3px;transform:scaleX(.88)">21</span></div><div class="c" style="left:75px;top:14px;width:15px;height:14px;font-size:12px;line-height:14px;color:#b48e58;border-right:1px solid #ffc46c;border-bottom:1px solid #ffc46c"><span style="letter-spacing:-0.3px;transform:scaleX(.88)">22</span></div><div class="c" style="left:90px;top:14px;width:15px;height:14px;font-size:12px;line-height:14px;color:#b48e58;border-right:1px solid #ffc46c;border-bottom:1px solid #ffc46c"><span style="letter-spacing:-0.3px;transform:scaleX(.88)">23</span></div><div class="c" style="left:105px;top:14px;width:15px;height:14px;font-size:12px;line-height:14px;color:#b48e58;border-right:1px solid #ffc46c;border-bottom:1px solid #ffc46c"><span style="letter-spacing:-0.3px;transform:scaleX(.88)">24</span></div><div class="c" style="left:120px;top:14px;width:15px;height:14px;font-size:12px;line-height:14px;color:#b48e58;border-right:1px solid #ffc46c;border-bottom:1px solid #ffc46c"><span style="letter-spacing:-0.3px;transform:scaleX(.88)">25</span></div><div class="c" style="left:135px;top:14px;width:15px;height:14px;font-size:12px;line-height:14px;color:#b48e58;border-right:1px solid #ffc46c;border-bottom:1px solid #ffc46c"><span style="letter-spacing:-0.3px;transform:scaleX(.88)">26</span></div><div class="c" style="left:150px;top:14px;width:15px;height:14px;font-size:12px;line-height:14px;color:#b48e58;border-right:1px solid #ffc46c;border-bottom:1px solid #ffc46c"><span style="letter-spacing:-0.3px;transform:scaleX(.88)">27</span></div><div class="c" style="left:165px;top:14px;width:15px;height:14px;font-size:12px;line-height:14px;color:#b48e58;border-right:1px solid #ffc46c;border-bottom:1px solid #ffc46c"><span style="letter-spacing:-0.3px;transform:scaleX(.88)">28</span></div><div class="c" style="left:180px;top:14px;width:15px;height:14px;font-size:12px;line-height:14px;color:#b48e58;border-right:1px solid #ffc46c;border-bottom:1px solid #ffc46c"><span style="letter-spacing:-0.3px;transform:scaleX(.88)">29</span></div><div class="c" style="left:195px;top:14px;width:15px;height:14px;font-size:12px;line-height:14px;color:#b48e58;border-right:1px solid #ffc46c;border-bottom:1px solid #ffc46c"><span style="letter-spacing:-0.3px;transform:scaleX(.88)">30</span></div><div class="c" style="left:210px;top:14px;width:15px;height:14px;font-size:12px;line-height:14px;color:#b48e58;border-right:1px solid #ffc46c;border-bottom:1px solid #ffc46c"><span style="letter-spacing:-0.3px;transform:scaleX(.88)">31</span></div><div class="c" style="left:225px;top:14px;width:15px;height:14px;font-size:12px;line-height:14px;color:#b48e58;border-right:1px solid #ffc46c;border-bottom:1px solid #ffc46c"><span style="letter-spacing:-0.3px;transform:scaleX(.88)">32</span></div></div>
<div class="" style="left:422px;top:265px;width:252px;height:1px;background:#fff"></div>
<div class="" style="left:422px;top:266px;width:252px;height:1px;background:#a0a0a0"></div>
<span class="t" style="left:426px;top:268px;font-size:12px;color:#000;transform:scaleX(0.88);">Signalisiert Brandalarme von Bereichen:</span>
<div class="" style="left:426px;top:282px;width:243px;height:30px;background:#ff9f10;box-sizing:border-box;border-top:1px solid #808080;border-left:1px solid #808080;border-right:1px solid #fff;border-bottom:1px solid #fff"></div>
<div class="" style="left:427px;top:283px;width:241px;height:28px;box-sizing:border-box;border-top:1px solid #8a6a3a;border-left:1px solid #8a6a3a;"></div>
<div class="" style="left:428px;top:284px;width:240px;height:27px;overflow:hidden"><div class="c" style="left:0px;top:0px;width:15px;height:14px;font-size:12px;line-height:14px;color:#000;border-right:1px solid #ffc46c;border-bottom:1px solid #ffc46c"><span style="letter-spacing:-0.3px;transform:scaleX(.88)">1</span></div><div class="c" style="left:15px;top:0px;width:15px;height:14px;font-size:12px;line-height:14px;color:#b48e58;border-right:1px solid #ffc46c;border-bottom:1px solid #ffc46c"><span style="letter-spacing:-0.3px;transform:scaleX(.88)">2</span></div><div class="c" style="left:30px;top:0px;width:15px;height:14px;font-size:12px;line-height:14px;color:#b48e58;border-right:1px solid #ffc46c;border-bottom:1px solid #ffc46c"><span style="letter-spacing:-0.3px;transform:scaleX(.88)">3</span></div><div class="c" style="left:45px;top:0px;width:15px;height:14px;font-size:12px;line-height:14px;color:#b48e58;border-right:1px solid #ffc46c;border-bottom:1px solid #ffc46c"><span style="letter-spacing:-0.3px;transform:scaleX(.88)">4</span></div><div class="c" style="left:60px;top:0px;width:15px;height:14px;font-size:12px;line-height:14px;color:#b48e58;border-right:1px solid #ffc46c;border-bottom:1px solid #ffc46c"><span style="letter-spacing:-0.3px;transform:scaleX(.88)">5</span></div><div class="c" style="left:75px;top:0px;width:15px;height:14px;font-size:12px;line-height:14px;color:#b48e58;border-right:1px solid #ffc46c;border-bottom:1px solid #ffc46c"><span style="letter-spacing:-0.3px;transform:scaleX(.88)">6</span></div><div class="c" style="left:90px;top:0px;width:15px;height:14px;font-size:12px;line-height:14px;color:#b48e58;border-right:1px solid #ffc46c;border-bottom:1px solid #ffc46c"><span style="letter-spacing:-0.3px;transform:scaleX(.88)">7</span></div><div class="c" style="left:105px;top:0px;width:15px;height:14px;font-size:12px;line-height:14px;color:#b48e58;border-right:1px solid #ffc46c;border-bottom:1px solid #ffc46c"><span style="letter-spacing:-0.3px;transform:scaleX(.88)">8</span></div><div class="c" style="left:120px;top:0px;width:15px;height:14px;font-size:12px;line-height:14px;color:#b48e58;border-right:1px solid #ffc46c;border-bottom:1px solid #ffc46c"><span style="letter-spacing:-0.3px;transform:scaleX(.88)">9</span></div><div class="c" style="left:135px;top:0px;width:15px;height:14px;font-size:12px;line-height:14px;color:#b48e58;border-right:1px solid #ffc46c;border-bottom:1px solid #ffc46c"><span style="letter-spacing:-0.3px;transform:scaleX(.88)">10</span></div><div class="c" style="left:150px;top:0px;width:15px;height:14px;font-size:12px;line-height:14px;color:#b48e58;border-right:1px solid #ffc46c;border-bottom:1px solid #ffc46c"><span style="letter-spacing:-0.3px;transform:scaleX(.88)">11</span></div><div class="c" style="left:165px;top:0px;width:15px;height:14px;font-size:12px;line-height:14px;color:#b48e58;border-right:1px solid #ffc46c;border-bottom:1px solid #ffc46c"><span style="letter-spacing:-0.3px;transform:scaleX(.88)">12</span></div><div class="c" style="left:180px;top:0px;width:15px;height:14px;font-size:12px;line-height:14px;color:#b48e58;border-right:1px solid #ffc46c;border-bottom:1px solid #ffc46c"><span style="letter-spacing:-0.3px;transform:scaleX(.88)">13</span></div><div class="c" style="left:195px;top:0px;width:15px;height:14px;font-size:12px;line-height:14px;color:#b48e58;border-right:1px solid #ffc46c;border-bottom:1px solid #ffc46c"><span style="letter-spacing:-0.3px;transform:scaleX(.88)">14</span></div><div class="c" style="left:210px;top:0px;width:15px;height:14px;font-size:12px;line-height:14px;color:#b48e58;border-right:1px solid #ffc46c;border-bottom:1px solid #ffc46c"><span style="letter-spacing:-0.3px;transform:scaleX(.88)">15</span></div><div class="c" style="left:225px;top:0px;width:15px;height:14px;font-size:12px;line-height:14px;color:#b48e58;border-right:1px solid #ffc46c;border-bottom:1px solid #ffc46c"><span style="letter-spacing:-0.3px;transform:scaleX(.88)">16</span></div><div class="c" style="left:0px;top:14px;width:15px;height:14px;font-size:12px;line-height:14px;color:#b48e58;border-right:1px solid #ffc46c;border-bottom:1px solid #ffc46c"><span style="letter-spacing:-0.3px;transform:scaleX(.88)">17</span></div><div class="c" style="left:15px;top:14px;width:15px;height:14px;font-size:12px;line-height:14px;color:#b48e58;border-right:1px solid #ffc46c;border-bottom:1px solid #ffc46c"><span style="letter-spacing:-0.3px;transform:scaleX(.88)">18</span></div><div class="c" style="left:30px;top:14px;width:15px;height:14px;font-size:12px;line-height:14px;color:#b48e58;border-right:1px solid #ffc46c;border-bottom:1px solid #ffc46c"><span style="letter-spacing:-0.3px;transform:scaleX(.88)">19</span></div><div class="c" style="left:45px;top:14px;width:15px;height:14px;font-size:12px;line-height:14px;color:#b48e58;border-right:1px solid #ffc46c;border-bottom:1px solid #ffc46c"><span style="letter-spacing:-0.3px;transform:scaleX(.88)">20</span></div><div class="c" style="left:60px;top:14px;width:15px;height:14px;font-size:12px;line-height:14px;color:#b48e58;border-right:1px solid #ffc46c;border-bottom:1px solid #ffc46c"><span style="letter-spacing:-0.3px;transform:scaleX(.88)">21</span></div><div class="c" style="left:75px;top:14px;width:15px;height:14px;font-size:12px;line-height:14px;color:#b48e58;border-right:1px solid #ffc46c;border-bottom:1px solid #ffc46c"><span style="letter-spacing:-0.3px;transform:scaleX(.88)">22</span></div><div class="c" style="left:90px;top:14px;width:15px;height:14px;font-size:12px;line-height:14px;color:#b48e58;border-right:1px solid #ffc46c;border-bottom:1px solid #ffc46c"><span style="letter-spacing:-0.3px;transform:scaleX(.88)">23</span></div><div class="c" style="left:105px;top:14px;width:15px;height:14px;font-size:12px;line-height:14px;color:#b48e58;border-right:1px solid #ffc46c;border-bottom:1px solid #ffc46c"><span style="letter-spacing:-0.3px;transform:scaleX(.88)">24</span></div><div class="c" style="left:120px;top:14px;width:15px;height:14px;font-size:12px;line-height:14px;color:#b48e58;border-right:1px solid #ffc46c;border-bottom:1px solid #ffc46c"><span style="letter-spacing:-0.3px;transform:scaleX(.88)">25</span></div><div class="c" style="left:135px;top:14px;width:15px;height:14px;font-size:12px;line-height:14px;color:#b48e58;border-right:1px solid #ffc46c;border-bottom:1px solid #ffc46c"><span style="letter-spacing:-0.3px;transform:scaleX(.88)">26</span></div><div class="c" style="left:150px;top:14px;width:15px;height:14px;font-size:12px;line-height:14px;color:#b48e58;border-right:1px solid #ffc46c;border-bottom:1px solid #ffc46c"><span style="letter-spacing:-0.3px;transform:scaleX(.88)">27</span></div><div class="c" style="left:165px;top:14px;width:15px;height:14px;font-size:12px;line-height:14px;color:#b48e58;border-right:1px solid #ffc46c;border-bottom:1px solid #ffc46c"><span style="letter-spacing:-0.3px;transform:scaleX(.88)">28</span></div><div class="c" style="left:180px;top:14px;width:15px;height:14px;font-size:12px;line-height:14px;color:#b48e58;border-right:1px solid #ffc46c;border-bottom:1px solid #ffc46c"><span style="letter-spacing:-0.3px;transform:scaleX(.88)">29</span></div><div class="c" style="left:195px;top:14px;width:15px;height:14px;font-size:12px;line-height:14px;color:#b48e58;border-right:1px solid #ffc46c;border-bottom:1px solid #ffc46c"><span style="letter-spacing:-0.3px;transform:scaleX(.88)">30</span></div><div class="c" style="left:210px;top:14px;width:15px;height:14px;font-size:12px;line-height:14px;color:#b48e58;border-right:1px solid #ffc46c;border-bottom:1px solid #ffc46c"><span style="letter-spacing:-0.3px;transform:scaleX(.88)">31</span></div><div class="c" style="left:225px;top:14px;width:15px;height:14px;font-size:12px;line-height:14px;color:#b48e58;border-right:1px solid #ffc46c;border-bottom:1px solid #ffc46c"><span style="letter-spacing:-0.3px;transform:scaleX(.88)">32</span></div></div>
<div class="" style="left:422px;top:316px;width:252px;height:1px;background:#fff"></div>
<div class="" style="left:422px;top:317px;width:252px;height:1px;background:#a0a0a0"></div>
<span class="t" style="left:426px;top:318px;font-size:12px;color:#000;transform:scaleX(0.88);">GONG-Signal von Linien:</span>
<div class="" style="left:426px;top:332px;width:243px;height:114px;background:#fff;box-sizing:border-box;border-top:1px solid #808080;border-left:1px solid #808080;border-right:1px solid #fff;border-bottom:1px solid #fff"></div>
<div class="" style="left:427px;top:333px;width:241px;height:112px;box-sizing:border-box;border-top:1px solid #5f5f5f;border-left:1px solid #5f5f5f;"></div>
<div class="" style="left:428px;top:334px;width:240px;height:111px;overflow:hidden"><div class="c" style="left:0px;top:0px;width:15px;height:14px;font-size:10px;line-height:11px;color:#000;font-weight:700;border-right:1px solid #c4c4c4;border-bottom:1px solid #c4c4c4"><span style="letter-spacing:-0.2px;transform:scale(.93,.9)">1</span></div><div class="c" style="left:15px;top:0px;width:15px;height:14px;font-size:10px;line-height:11px;color:#000;font-weight:700;border-right:1px solid #c4c4c4;border-bottom:1px solid #c4c4c4"><span style="letter-spacing:-0.2px;transform:scale(.93,.9)">2</span></div><div class="c" style="left:30px;top:0px;width:15px;height:14px;font-size:10px;line-height:11px;color:#000;font-weight:700;border-right:1px solid #c4c4c4;border-bottom:1px solid #c4c4c4"><span style="letter-spacing:-0.2px;transform:scale(.93,.9)">3</span></div><div class="c" style="left:45px;top:0px;width:15px;height:14px;font-size:10px;line-height:11px;color:#000;font-weight:700;border-right:1px solid #c4c4c4;border-bottom:1px solid #c4c4c4"><span style="letter-spacing:-0.2px;transform:scale(.93,.9)">4</span></div><div class="c" style="left:60px;top:0px;width:15px;height:14px;font-size:10px;line-height:11px;color:#000;font-weight:700;border-right:1px solid #c4c4c4;border-bottom:1px solid #c4c4c4"><span style="letter-spacing:-0.2px;transform:scale(.93,.9)">5</span></div><div class="c" style="left:75px;top:0px;width:15px;height:14px;font-size:10px;line-height:11px;color:#000;font-weight:700;border-right:1px solid #c4c4c4;border-bottom:1px solid #c4c4c4"><span style="letter-spacing:-0.2px;transform:scale(.93,.9)">6</span></div><div class="c" style="left:90px;top:0px;width:15px;height:14px;font-size:10px;line-height:11px;color:#000;font-weight:700;border-right:1px solid #c4c4c4;border-bottom:1px solid #c4c4c4"><span style="letter-spacing:-0.2px;transform:scale(.93,.9)">7</span></div><div class="c" style="left:105px;top:0px;width:15px;height:14px;font-size:10px;line-height:11px;color:#000;font-weight:700;border-right:1px solid #c4c4c4;border-bottom:1px solid #c4c4c4"><span style="letter-spacing:-0.2px;transform:scale(.93,.9)">8</span></div><div class="c" style="left:120px;top:0px;width:15px;height:14px;font-size:10px;line-height:11px;color:#000;font-weight:700;border-right:1px solid #c4c4c4;border-bottom:1px solid #c4c4c4"><span style="letter-spacing:-0.2px;transform:scale(.93,.9)">9</span></div><div class="c" style="left:135px;top:0px;width:15px;height:14px;font-size:10px;line-height:11px;color:#000;font-weight:700;border-right:1px solid #c4c4c4;border-bottom:1px solid #c4c4c4"><span style="letter-spacing:-0.2px;transform:scale(.93,.9)">10</span></div><div class="c" style="left:150px;top:0px;width:15px;height:14px;font-size:10px;line-height:11px;color:#000;font-weight:700;border-right:1px solid #c4c4c4;border-bottom:1px solid #c4c4c4"><span style="letter-spacing:-0.2px;transform:scale(.93,.9)">11</span></div><div class="c" style="left:165px;top:0px;width:15px;height:14px;font-size:10px;line-height:11px;color:#000;font-weight:700;border-right:1px solid #c4c4c4;border-bottom:1px solid #c4c4c4"><span style="letter-spacing:-0.2px;transform:scale(.93,.9)">12</span></div><div class="c" style="left:180px;top:0px;width:15px;height:14px;font-size:10px;line-height:11px;color:#000;font-weight:700;border-right:1px solid #c4c4c4;border-bottom:1px solid #c4c4c4"><span style="letter-spacing:-0.2px;transform:scale(.93,.9)">13</span></div><div class="c" style="left:195px;top:0px;width:15px;height:14px;font-size:10px;line-height:11px;color:#000;font-weight:700;border-right:1px solid #c4c4c4;border-bottom:1px solid #c4c4c4"><span style="letter-spacing:-0.2px;transform:scale(.93,.9)">14</span></div><div class="c" style="left:210px;top:0px;width:15px;height:14px;font-size:10px;line-height:11px;color:#000;font-weight:700;border-right:1px solid #c4c4c4;border-bottom:1px solid #c4c4c4"><span style="letter-spacing:-0.2px;transform:scale(.93,.9)">15</span></div><div class="c" style="left:225px;top:0px;width:15px;height:14px;font-size:10px;line-height:11px;color:#000;font-weight:700;border-right:1px solid #c4c4c4;border-bottom:1px solid #c4c4c4"><span style="letter-spacing:-0.2px;transform:scale(.93,.9)">16</span></div><div class="c" style="left:0px;top:14px;width:15px;height:14px;font-size:10px;line-height:11px;color:#000;font-weight:700;border-right:1px solid #c4c4c4;border-bottom:1px solid #c4c4c4"><span style="letter-spacing:-0.2px;transform:scale(.93,.9)">17</span></div><div class="c" style="left:15px;top:14px;width:15px;height:14px;font-size:10px;line-height:11px;color:#000;font-weight:700;border-right:1px solid #c4c4c4;border-bottom:1px solid #c4c4c4"><span style="letter-spacing:-0.2px;transform:scale(.93,.9)">18</span></div><div class="c" style="left:30px;top:14px;width:15px;height:14px;font-size:10px;line-height:11px;color:#000;font-weight:700;border-right:1px solid #c4c4c4;border-bottom:1px solid #c4c4c4"><span style="letter-spacing:-0.2px;transform:scale(.93,.9)">19</span></div><div class="c" style="left:45px;top:14px;width:15px;height:14px;font-size:10px;line-height:11px;color:#000;font-weight:700;border-right:1px solid #c4c4c4;border-bottom:1px solid #c4c4c4"><span style="letter-spacing:-0.2px;transform:scale(.93,.9)">20</span></div><div class="c" style="left:60px;top:14px;width:15px;height:14px;font-size:10px;line-height:11px;color:#000;font-weight:700;border-right:1px solid #c4c4c4;border-bottom:1px solid #c4c4c4"><span style="letter-spacing:-0.2px;transform:scale(.93,.9)">21</span></div><div class="c" style="left:75px;top:14px;width:15px;height:14px;font-size:10px;line-height:11px;color:#000;font-weight:700;border-right:1px solid #c4c4c4;border-bottom:1px solid #c4c4c4"><span style="letter-spacing:-0.2px;transform:scale(.93,.9)">22</span></div><div class="c" style="left:90px;top:14px;width:15px;height:14px;font-size:10px;line-height:11px;color:#000;font-weight:700;border-right:1px solid #c4c4c4;border-bottom:1px solid #c4c4c4"><span style="letter-spacing:-0.2px;transform:scale(.93,.9)">23</span></div><div class="c" style="left:105px;top:14px;width:15px;height:14px;font-size:10px;line-height:11px;color:#000;font-weight:700;border-right:1px solid #c4c4c4;border-bottom:1px solid #c4c4c4"><span style="letter-spacing:-0.2px;transform:scale(.93,.9)">24</span></div><div class="c" style="left:120px;top:14px;width:15px;height:14px;font-size:10px;line-height:11px;color:#000;font-weight:700;border-right:1px solid #c4c4c4;border-bottom:1px solid #c4c4c4"><span style="letter-spacing:-0.2px;transform:scale(.93,.9)">25</span></div><div class="c" style="left:135px;top:14px;width:15px;height:14px;font-size:10px;line-height:11px;color:#000;font-weight:700;border-right:1px solid #c4c4c4;border-bottom:1px solid #c4c4c4"><span style="letter-spacing:-0.2px;transform:scale(.93,.9)">26</span></div><div class="c" style="left:150px;top:14px;width:15px;height:14px;font-size:10px;line-height:11px;color:#000;font-weight:700;border-right:1px solid #c4c4c4;border-bottom:1px solid #c4c4c4"><span style="letter-spacing:-0.2px;transform:scale(.93,.9)">27</span></div><div class="c" style="left:165px;top:14px;width:15px;height:14px;font-size:10px;line-height:11px;color:#000;font-weight:700;border-right:1px solid #c4c4c4;border-bottom:1px solid #c4c4c4"><span style="letter-spacing:-0.2px;transform:scale(.93,.9)">28</span></div><div class="c" style="left:180px;top:14px;width:15px;height:14px;font-size:10px;line-height:11px;color:#000;font-weight:700;border-right:1px solid #c4c4c4;border-bottom:1px solid #c4c4c4"><span style="letter-spacing:-0.2px;transform:scale(.93,.9)">29</span></div><div class="c" style="left:195px;top:14px;width:15px;height:14px;font-size:10px;line-height:11px;color:#000;font-weight:700;border-right:1px solid #c4c4c4;border-bottom:1px solid #c4c4c4"><span style="letter-spacing:-0.2px;transform:scale(.93,.9)">30</span></div><div class="c" style="left:210px;top:14px;width:15px;height:14px;font-size:10px;line-height:11px;color:#000;font-weight:700;border-right:1px solid #c4c4c4;border-bottom:1px solid #c4c4c4"><span style="letter-spacing:-0.2px;transform:scale(.93,.9)">31</span></div><div class="c" style="left:225px;top:14px;width:15px;height:14px;font-size:10px;line-height:11px;color:#000;font-weight:700;border-right:1px solid #c4c4c4;border-bottom:1px solid #c4c4c4"><span style="letter-spacing:-0.2px;transform:scale(.93,.9)">32</span></div><div class="c" style="left:0px;top:28px;width:15px;height:14px;font-size:10px;line-height:11px;color:#a0a0a0;border-right:1px solid #c4c4c4;border-bottom:1px solid #c4c4c4"><span style="letter-spacing:-0.2px;transform:scale(.93,.9)">33</span></div><div class="c" style="left:15px;top:28px;width:15px;height:14px;font-size:10px;line-height:11px;color:#a0a0a0;border-right:1px solid #c4c4c4;border-bottom:1px solid #c4c4c4"><span style="letter-spacing:-0.2px;transform:scale(.93,.9)">34</span></div><div class="c" style="left:30px;top:28px;width:15px;height:14px;font-size:10px;line-height:11px;color:#a0a0a0;border-right:1px solid #c4c4c4;border-bottom:1px solid #c4c4c4"><span style="letter-spacing:-0.2px;transform:scale(.93,.9)">35</span></div><div class="c" style="left:45px;top:28px;width:15px;height:14px;font-size:10px;line-height:11px;color:#a0a0a0;border-right:1px solid #c4c4c4;border-bottom:1px solid #c4c4c4"><span style="letter-spacing:-0.2px;transform:scale(.93,.9)">36</span></div><div class="c" style="left:60px;top:28px;width:15px;height:14px;font-size:10px;line-height:11px;color:#a0a0a0;border-right:1px solid #c4c4c4;border-bottom:1px solid #c4c4c4"><span style="letter-spacing:-0.2px;transform:scale(.93,.9)">37</span></div><div class="c" style="left:75px;top:28px;width:15px;height:14px;font-size:10px;line-height:11px;color:#a0a0a0;border-right:1px solid #c4c4c4;border-bottom:1px solid #c4c4c4"><span style="letter-spacing:-0.2px;transform:scale(.93,.9)">38</span></div><div class="c" style="left:90px;top:28px;width:15px;height:14px;font-size:10px;line-height:11px;color:#a0a0a0;border-right:1px solid #c4c4c4;border-bottom:1px solid #c4c4c4"><span style="letter-spacing:-0.2px;transform:scale(.93,.9)">39</span></div><div class="c" style="left:105px;top:28px;width:15px;height:14px;font-size:10px;line-height:11px;color:#a0a0a0;border-right:1px solid #c4c4c4;border-bottom:1px solid #c4c4c4"><span style="letter-spacing:-0.2px;transform:scale(.93,.9)">40</span></div><div class="c" style="left:120px;top:28px;width:15px;height:14px;font-size:10px;line-height:11px;color:#a0a0a0;border-right:1px solid #c4c4c4;border-bottom:1px solid #c4c4c4"><span style="letter-spacing:-0.2px;transform:scale(.93,.9)">41</span></div><div class="c" style="left:135px;top:28px;width:15px;height:14px;font-size:10px;line-height:11px;color:#a0a0a0;border-right:1px solid #c4c4c4;border-bottom:1px solid #c4c4c4"><span style="letter-spacing:-0.2px;transform:scale(.93,.9)">42</span></div><div class="c" style="left:150px;top:28px;width:15px;height:14px;font-size:10px;line-height:11px;color:#a0a0a0;border-right:1px solid #c4c4c4;border-bottom:1px solid #c4c4c4"><span style="letter-spacing:-0.2px;transform:scale(.93,.9)">43</span></div><div class="c" style="left:165px;top:28px;width:15px;height:14px;font-size:10px;line-height:11px;color:#a0a0a0;border-right:1px solid #c4c4c4;border-bottom:1px solid #c4c4c4"><span style="letter-spacing:-0.2px;transform:scale(.93,.9)">44</span></div><div class="c" style="left:180px;top:28px;width:15px;height:14px;font-size:10px;line-height:11px;color:#a0a0a0;border-right:1px solid #c4c4c4;border-bottom:1px solid #c4c4c4"><span style="letter-spacing:-0.2px;transform:scale(.93,.9)">45</span></div><div class="c" style="left:195px;top:28px;width:15px;height:14px;font-size:10px;line-height:11px;color:#a0a0a0;border-right:1px solid #c4c4c4;border-bottom:1px solid #c4c4c4"><span style="letter-spacing:-0.2px;transform:scale(.93,.9)">46</span></div><div class="c" style="left:210px;top:28px;width:15px;height:14px;font-size:10px;line-height:11px;color:#a0a0a0;border-right:1px solid #c4c4c4;border-bottom:1px solid #c4c4c4"><span style="letter-spacing:-0.2px;transform:scale(.93,.9)">47</span></div><div class="c" style="left:225px;top:28px;width:15px;height:14px;font-size:10px;line-height:11px;color:#a0a0a0;border-right:1px solid #c4c4c4;border-bottom:1px solid #c4c4c4"><span style="letter-spacing:-0.2px;transform:scale(.93,.9)">48</span></div><div class="c" style="left:0px;top:42px;width:15px;height:14px;font-size:10px;line-height:11px;color:#a0a0a0;border-right:1px solid #c4c4c4;border-bottom:1px solid #c4c4c4"><span style="letter-spacing:-0.2px;transform:scale(.93,.9)">49</span></div><div class="c" style="left:15px;top:42px;width:15px;height:14px;font-size:10px;line-height:11px;color:#a0a0a0;border-right:1px solid #c4c4c4;border-bottom:1px solid #c4c4c4"><span style="letter-spacing:-0.2px;transform:scale(.93,.9)">50</span></div><div class="c" style="left:30px;top:42px;width:15px;height:14px;font-size:10px;line-height:11px;color:#a0a0a0;border-right:1px solid #c4c4c4;border-bottom:1px solid #c4c4c4"><span style="letter-spacing:-0.2px;transform:scale(.93,.9)">51</span></div><div class="c" style="left:45px;top:42px;width:15px;height:14px;font-size:10px;line-height:11px;color:#a0a0a0;border-right:1px solid #c4c4c4;border-bottom:1px solid #c4c4c4"><span style="letter-spacing:-0.2px;transform:scale(.93,.9)">52</span></div><div class="c" style="left:60px;top:42px;width:15px;height:14px;font-size:10px;line-height:11px;color:#a0a0a0;border-right:1px solid #c4c4c4;border-bottom:1px solid #c4c4c4"><span style="letter-spacing:-0.2px;transform:scale(.93,.9)">53</span></div><div class="c" style="left:75px;top:42px;width:15px;height:14px;font-size:10px;line-height:11px;color:#a0a0a0;border-right:1px solid #c4c4c4;border-bottom:1px solid #c4c4c4"><span style="letter-spacing:-0.2px;transform:scale(.93,.9)">54</span></div><div class="c" style="left:90px;top:42px;width:15px;height:14px;font-size:10px;line-height:11px;color:#a0a0a0;border-right:1px solid #c4c4c4;border-bottom:1px solid #c4c4c4"><span style="letter-spacing:-0.2px;transform:scale(.93,.9)">55</span></div><div class="c" style="left:105px;top:42px;width:15px;height:14px;font-size:10px;line-height:11px;color:#a0a0a0;border-right:1px solid #c4c4c4;border-bottom:1px solid #c4c4c4"><span style="letter-spacing:-0.2px;transform:scale(.93,.9)">56</span></div><div class="c" style="left:120px;top:42px;width:15px;height:14px;font-size:10px;line-height:11px;color:#a0a0a0;border-right:1px solid #c4c4c4;border-bottom:1px solid #c4c4c4"><span style="letter-spacing:-0.2px;transform:scale(.93,.9)">57</span></div><div class="c" style="left:135px;top:42px;width:15px;height:14px;font-size:10px;line-height:11px;color:#a0a0a0;border-right:1px solid #c4c4c4;border-bottom:1px solid #c4c4c4"><span style="letter-spacing:-0.2px;transform:scale(.93,.9)">58</span></div><div class="c" style="left:150px;top:42px;width:15px;height:14px;font-size:10px;line-height:11px;color:#a0a0a0;border-right:1px solid #c4c4c4;border-bottom:1px solid #c4c4c4"><span style="letter-spacing:-0.2px;transform:scale(.93,.9)">59</span></div><div class="c" style="left:165px;top:42px;width:15px;height:14px;font-size:10px;line-height:11px;color:#a0a0a0;border-right:1px solid #c4c4c4;border-bottom:1px solid #c4c4c4"><span style="letter-spacing:-0.2px;transform:scale(.93,.9)">60</span></div><div class="c" style="left:180px;top:42px;width:15px;height:14px;font-size:10px;line-height:11px;color:#a0a0a0;border-right:1px solid #c4c4c4;border-bottom:1px solid #c4c4c4"><span style="letter-spacing:-0.2px;transform:scale(.93,.9)">61</span></div><div class="c" style="left:195px;top:42px;width:15px;height:14px;font-size:10px;line-height:11px;color:#a0a0a0;border-right:1px solid #c4c4c4;border-bottom:1px solid #c4c4c4"><span style="letter-spacing:-0.2px;transform:scale(.93,.9)">62</span></div><div class="c" style="left:210px;top:42px;width:15px;height:14px;font-size:10px;line-height:11px;color:#a0a0a0;border-right:1px solid #c4c4c4;border-bottom:1px solid #c4c4c4"><span style="letter-spacing:-0.2px;transform:scale(.93,.9)">63</span></div><div class="c" style="left:225px;top:42px;width:15px;height:14px;font-size:10px;line-height:11px;color:#a0a0a0;border-right:1px solid #c4c4c4;border-bottom:1px solid #c4c4c4"><span style="letter-spacing:-0.2px;transform:scale(.93,.9)">64</span></div><div class="c" style="left:0px;top:56px;width:15px;height:14px;font-size:10px;line-height:11px;color:#a0a0a0;border-right:1px solid #c4c4c4;border-bottom:1px solid #c4c4c4"><span style="letter-spacing:-0.2px;transform:scale(.93,.9)">65</span></div><div class="c" style="left:15px;top:56px;width:15px;height:14px;font-size:10px;line-height:11px;color:#a0a0a0;border-right:1px solid #c4c4c4;border-bottom:1px solid #c4c4c4"><span style="letter-spacing:-0.2px;transform:scale(.93,.9)">66</span></div><div class="c" style="left:30px;top:56px;width:15px;height:14px;font-size:10px;line-height:11px;color:#a0a0a0;border-right:1px solid #c4c4c4;border-bottom:1px solid #c4c4c4"><span style="letter-spacing:-0.2px;transform:scale(.93,.9)">67</span></div><div class="c" style="left:45px;top:56px;width:15px;height:14px;font-size:10px;line-height:11px;color:#a0a0a0;border-right:1px solid #c4c4c4;border-bottom:1px solid #c4c4c4"><span style="letter-spacing:-0.2px;transform:scale(.93,.9)">68</span></div><div class="c" style="left:60px;top:56px;width:15px;height:14px;font-size:10px;line-height:11px;color:#a0a0a0;border-right:1px solid #c4c4c4;border-bottom:1px solid #c4c4c4"><span style="letter-spacing:-0.2px;transform:scale(.93,.9)">69</span></div><div class="c" style="left:75px;top:56px;width:15px;height:14px;font-size:10px;line-height:11px;color:#a0a0a0;border-right:1px solid #c4c4c4;border-bottom:1px solid #c4c4c4"><span style="letter-spacing:-0.2px;transform:scale(.93,.9)">70</span></div><div class="c" style="left:90px;top:56px;width:15px;height:14px;font-size:10px;line-height:11px;color:#a0a0a0;border-right:1px solid #c4c4c4;border-bottom:1px solid #c4c4c4"><span style="letter-spacing:-0.2px;transform:scale(.93,.9)">71</span></div><div class="c" style="left:105px;top:56px;width:15px;height:14px;font-size:10px;line-height:11px;color:#a0a0a0;border-right:1px solid #c4c4c4;border-bottom:1px solid #c4c4c4"><span style="letter-spacing:-0.2px;transform:scale(.93,.9)">72</span></div><div class="c" style="left:120px;top:56px;width:15px;height:14px;font-size:10px;line-height:11px;color:#a0a0a0;border-right:1px solid #c4c4c4;border-bottom:1px solid #c4c4c4"><span style="letter-spacing:-0.2px;transform:scale(.93,.9)">73</span></div><div class="c" style="left:135px;top:56px;width:15px;height:14px;font-size:10px;line-height:11px;color:#a0a0a0;border-right:1px solid #c4c4c4;border-bottom:1px solid #c4c4c4"><span style="letter-spacing:-0.2px;transform:scale(.93,.9)">74</span></div><div class="c" style="left:150px;top:56px;width:15px;height:14px;font-size:10px;line-height:11px;color:#a0a0a0;border-right:1px solid #c4c4c4;border-bottom:1px solid #c4c4c4"><span style="letter-spacing:-0.2px;transform:scale(.93,.9)">75</span></div><div class="c" style="left:165px;top:56px;width:15px;height:14px;font-size:10px;line-height:11px;color:#a0a0a0;border-right:1px solid #c4c4c4;border-bottom:1px solid #c4c4c4"><span style="letter-spacing:-0.2px;transform:scale(.93,.9)">76</span></div><div class="c" style="left:180px;top:56px;width:15px;height:14px;font-size:10px;line-height:11px;color:#a0a0a0;border-right:1px solid #c4c4c4;border-bottom:1px solid #c4c4c4"><span style="letter-spacing:-0.2px;transform:scale(.93,.9)">77</span></div><div class="c" style="left:195px;top:56px;width:15px;height:14px;font-size:10px;line-height:11px;color:#a0a0a0;border-right:1px solid #c4c4c4;border-bottom:1px solid #c4c4c4"><span style="letter-spacing:-0.2px;transform:scale(.93,.9)">78</span></div><div class="c" style="left:210px;top:56px;width:15px;height:14px;font-size:10px;line-height:11px;color:#a0a0a0;border-right:1px solid #c4c4c4;border-bottom:1px solid #c4c4c4"><span style="letter-spacing:-0.2px;transform:scale(.93,.9)">79</span></div><div class="c" style="left:225px;top:56px;width:15px;height:14px;font-size:10px;line-height:11px;color:#a0a0a0;border-right:1px solid #c4c4c4;border-bottom:1px solid #c4c4c4"><span style="letter-spacing:-0.2px;transform:scale(.93,.9)">80</span></div><div class="c" style="left:0px;top:70px;width:15px;height:14px;font-size:10px;line-height:11px;color:#a0a0a0;border-right:1px solid #c4c4c4;border-bottom:1px solid #c4c4c4"><span style="letter-spacing:-0.2px;transform:scale(.93,.9)">81</span></div><div class="c" style="left:15px;top:70px;width:15px;height:14px;font-size:10px;line-height:11px;color:#a0a0a0;border-right:1px solid #c4c4c4;border-bottom:1px solid #c4c4c4"><span style="letter-spacing:-0.2px;transform:scale(.93,.9)">82</span></div><div class="c" style="left:30px;top:70px;width:15px;height:14px;font-size:10px;line-height:11px;color:#a0a0a0;border-right:1px solid #c4c4c4;border-bottom:1px solid #c4c4c4"><span style="letter-spacing:-0.2px;transform:scale(.93,.9)">83</span></div><div class="c" style="left:45px;top:70px;width:15px;height:14px;font-size:10px;line-height:11px;color:#a0a0a0;border-right:1px solid #c4c4c4;border-bottom:1px solid #c4c4c4"><span style="letter-spacing:-0.2px;transform:scale(.93,.9)">84</span></div><div class="c" style="left:60px;top:70px;width:15px;height:14px;font-size:10px;line-height:11px;color:#a0a0a0;border-right:1px solid #c4c4c4;border-bottom:1px solid #c4c4c4"><span style="letter-spacing:-0.2px;transform:scale(.93,.9)">85</span></div><div class="c" style="left:75px;top:70px;width:15px;height:14px;font-size:10px;line-height:11px;color:#a0a0a0;border-right:1px solid #c4c4c4;border-bottom:1px solid #c4c4c4"><span style="letter-spacing:-0.2px;transform:scale(.93,.9)">86</span></div><div class="c" style="left:90px;top:70px;width:15px;height:14px;font-size:10px;line-height:11px;color:#a0a0a0;border-right:1px solid #c4c4c4;border-bottom:1px solid #c4c4c4"><span style="letter-spacing:-0.2px;transform:scale(.93,.9)">87</span></div><div class="c" style="left:105px;top:70px;width:15px;height:14px;font-size:10px;line-height:11px;color:#a0a0a0;border-right:1px solid #c4c4c4;border-bottom:1px solid #c4c4c4"><span style="letter-spacing:-0.2px;transform:scale(.93,.9)">88</span></div><div class="c" style="left:120px;top:70px;width:15px;height:14px;font-size:10px;line-height:11px;color:#a0a0a0;border-right:1px solid #c4c4c4;border-bottom:1px solid #c4c4c4"><span style="letter-spacing:-0.2px;transform:scale(.93,.9)">89</span></div><div class="c" style="left:135px;top:70px;width:15px;height:14px;font-size:10px;line-height:11px;color:#a0a0a0;border-right:1px solid #c4c4c4;border-bottom:1px solid #c4c4c4"><span style="letter-spacing:-0.2px;transform:scale(.93,.9)">90</span></div><div class="c" style="left:150px;top:70px;width:15px;height:14px;font-size:10px;line-height:11px;color:#a0a0a0;border-right:1px solid #c4c4c4;border-bottom:1px solid #c4c4c4"><span style="letter-spacing:-0.2px;transform:scale(.93,.9)">91</span></div><div class="c" style="left:165px;top:70px;width:15px;height:14px;font-size:10px;line-height:11px;color:#a0a0a0;border-right:1px solid #c4c4c4;border-bottom:1px solid #c4c4c4"><span style="letter-spacing:-0.2px;transform:scale(.93,.9)">92</span></div><div class="c" style="left:180px;top:70px;width:15px;height:14px;font-size:10px;line-height:11px;color:#a0a0a0;border-right:1px solid #c4c4c4;border-bottom:1px solid #c4c4c4"><span style="letter-spacing:-0.2px;transform:scale(.93,.9)">93</span></div><div class="c" style="left:195px;top:70px;width:15px;height:14px;font-size:10px;line-height:11px;color:#a0a0a0;border-right:1px solid #c4c4c4;border-bottom:1px solid #c4c4c4"><span style="letter-spacing:-0.2px;transform:scale(.93,.9)">94</span></div><div class="c" style="left:210px;top:70px;width:15px;height:14px;font-size:10px;line-height:11px;color:#a0a0a0;border-right:1px solid #c4c4c4;border-bottom:1px solid #c4c4c4"><span style="letter-spacing:-0.2px;transform:scale(.93,.9)">95</span></div><div class="c" style="left:225px;top:70px;width:15px;height:14px;font-size:10px;line-height:11px;color:#a0a0a0;border-right:1px solid #c4c4c4;border-bottom:1px solid #c4c4c4"><span style="letter-spacing:-0.2px;transform:scale(.93,.9)">96</span></div><div class="c" style="left:0px;top:84px;width:15px;height:14px;font-size:10px;line-height:11px;color:#a0a0a0;border-right:1px solid #c4c4c4;border-bottom:1px solid #c4c4c4"><span style="letter-spacing:-0.2px;transform:scale(.93,.9)">97</span></div><div class="c" style="left:15px;top:84px;width:15px;height:14px;font-size:10px;line-height:11px;color:#a0a0a0;border-right:1px solid #c4c4c4;border-bottom:1px solid #c4c4c4"><span style="letter-spacing:-0.2px;transform:scale(.93,.9)">98</span></div><div class="c" style="left:30px;top:84px;width:15px;height:14px;font-size:10px;line-height:11px;color:#a0a0a0;border-right:1px solid #c4c4c4;border-bottom:1px solid #c4c4c4"><span style="letter-spacing:-0.2px;transform:scale(.93,.9)">99</span></div><div class="c" style="left:45px;top:84px;width:15px;height:14px;font-size:10px;line-height:11px;color:#000;background:#ff9f10;border-right:1px solid #c4c4c4;border-bottom:1px solid #c4c4c4"><span style="letter-spacing:-0.2px;transform:scale(.93,.9)">100</span></div><div class="c" style="left:60px;top:84px;width:15px;height:14px;font-size:10px;line-height:11px;color:#a0a0a0;border-right:1px solid transparent;border-bottom:1px solid #c4c4c4"><span style="letter-spacing:-0.65px;transform:scale(.93,.9);padding-left:0">101</span></div><div class="c" style="left:75px;top:84px;width:15px;height:14px;font-size:10px;line-height:11px;color:#a0a0a0;border-right:1px solid transparent;border-bottom:1px solid #c4c4c4"><span style="letter-spacing:-0.65px;transform:scale(.93,.9);padding-left:0">102</span></div><div class="c" style="left:90px;top:84px;width:15px;height:14px;font-size:10px;line-height:11px;color:#a0a0a0;border-right:1px solid transparent;border-bottom:1px solid #c4c4c4"><span style="letter-spacing:-0.65px;transform:scale(.93,.9);padding-left:0">103</span></div><div class="c" style="left:105px;top:84px;width:15px;height:14px;font-size:10px;line-height:11px;color:#a0a0a0;border-right:1px solid transparent;border-bottom:1px solid #c4c4c4"><span style="letter-spacing:-0.65px;transform:scale(.93,.9);padding-left:0">104</span></div><div class="c" style="left:120px;top:84px;width:15px;height:14px;font-size:10px;line-height:11px;color:#a0a0a0;border-right:1px solid transparent;border-bottom:1px solid #c4c4c4"><span style="letter-spacing:-0.65px;transform:scale(.93,.9);padding-left:0">105</span></div><div class="c" style="left:135px;top:84px;width:15px;height:14px;font-size:10px;line-height:11px;color:#a0a0a0;border-right:1px solid transparent;border-bottom:1px solid #c4c4c4"><span style="letter-spacing:-0.65px;transform:scale(.93,.9);padding-left:0">106</span></div><div class="c" style="left:150px;top:84px;width:15px;height:14px;font-size:10px;line-height:11px;color:#a0a0a0;border-right:1px solid transparent;border-bottom:1px solid #c4c4c4"><span style="letter-spacing:-0.65px;transform:scale(.93,.9);padding-left:0">107</span></div><div class="c" style="left:165px;top:84px;width:15px;height:14px;font-size:10px;line-height:11px;color:#a0a0a0;border-right:1px solid transparent;border-bottom:1px solid #c4c4c4"><span style="letter-spacing:-0.65px;transform:scale(.93,.9);padding-left:0">108</span></div><div class="c" style="left:180px;top:84px;width:15px;height:14px;font-size:10px;line-height:11px;color:#a0a0a0;border-right:1px solid transparent;border-bottom:1px solid #c4c4c4"><span style="letter-spacing:-0.65px;transform:scale(.93,.9);padding-left:0">109</span></div><div class="c" style="left:195px;top:84px;width:15px;height:14px;font-size:10px;line-height:11px;color:#a0a0a0;border-right:1px solid transparent;border-bottom:1px solid #c4c4c4"><span style="letter-spacing:-0.65px;transform:scale(.93,.9);padding-left:0">110</span></div><div class="c" style="left:210px;top:84px;width:15px;height:14px;font-size:10px;line-height:11px;color:#a0a0a0;border-right:1px solid transparent;border-bottom:1px solid #c4c4c4"><span style="letter-spacing:-0.65px;transform:scale(.93,.9);padding-left:0">111</span></div><div class="c" style="left:225px;top:84px;width:15px;height:14px;font-size:10px;line-height:11px;color:#a0a0a0;border-right:1px solid transparent;border-bottom:1px solid #c4c4c4"><span style="letter-spacing:-0.65px;transform:scale(.93,.9);padding-left:0">112</span></div><div class="c" style="left:0px;top:98px;width:15px;height:14px;font-size:10px;line-height:11px;color:#a0a0a0;border-right:1px solid transparent;border-bottom:1px solid #c4c4c4"><span style="letter-spacing:-0.65px;transform:scale(.93,.9);padding-left:0">113</span></div><div class="c" style="left:15px;top:98px;width:15px;height:14px;font-size:10px;line-height:11px;color:#a0a0a0;border-right:1px solid transparent;border-bottom:1px solid #c4c4c4"><span style="letter-spacing:-0.65px;transform:scale(.93,.9);padding-left:0">114</span></div><div class="c" style="left:30px;top:98px;width:15px;height:14px;font-size:10px;line-height:11px;color:#a0a0a0;border-right:1px solid transparent;border-bottom:1px solid #c4c4c4"><span style="letter-spacing:-0.65px;transform:scale(.93,.9);padding-left:0">115</span></div><div class="c" style="left:45px;top:98px;width:15px;height:14px;font-size:10px;line-height:11px;color:#a0a0a0;border-right:1px solid transparent;border-bottom:1px solid #c4c4c4"><span style="letter-spacing:-0.65px;transform:scale(.93,.9);padding-left:0">116</span></div><div class="c" style="left:60px;top:98px;width:15px;height:14px;font-size:10px;line-height:11px;color:#a0a0a0;border-right:1px solid transparent;border-bottom:1px solid #c4c4c4"><span style="letter-spacing:-0.65px;transform:scale(.93,.9);padding-left:0">117</span></div><div class="c" style="left:75px;top:98px;width:15px;height:14px;font-size:10px;line-height:11px;color:#a0a0a0;border-right:1px solid transparent;border-bottom:1px solid #c4c4c4"><span style="letter-spacing:-0.65px;transform:scale(.93,.9);padding-left:0">118</span></div><div class="c" style="left:90px;top:98px;width:15px;height:14px;font-size:10px;line-height:11px;color:#a0a0a0;border-right:1px solid transparent;border-bottom:1px solid #c4c4c4"><span style="letter-spacing:-0.65px;transform:scale(.93,.9);padding-left:0">119</span></div><div class="c" style="left:105px;top:98px;width:15px;height:14px;font-size:10px;line-height:11px;color:#a0a0a0;border-right:1px solid transparent;border-bottom:1px solid #c4c4c4"><span style="letter-spacing:-0.65px;transform:scale(.93,.9);padding-left:0">120</span></div><div class="c" style="left:120px;top:98px;width:15px;height:14px;font-size:10px;line-height:11px;color:#a0a0a0;border-right:1px solid transparent;border-bottom:1px solid #c4c4c4"><span style="letter-spacing:-0.65px;transform:scale(.93,.9);padding-left:0">121</span></div><div class="c" style="left:135px;top:98px;width:15px;height:14px;font-size:10px;line-height:11px;color:#a0a0a0;border-right:1px solid transparent;border-bottom:1px solid #c4c4c4"><span style="letter-spacing:-0.65px;transform:scale(.93,.9);padding-left:0">122</span></div><div class="c" style="left:150px;top:98px;width:15px;height:14px;font-size:10px;line-height:11px;color:#a0a0a0;border-right:1px solid transparent;border-bottom:1px solid #c4c4c4"><span style="letter-spacing:-0.65px;transform:scale(.93,.9);padding-left:0">123</span></div><div class="c" style="left:165px;top:98px;width:15px;height:14px;font-size:10px;line-height:11px;color:#a0a0a0;border-right:1px solid transparent;border-bottom:1px solid #c4c4c4"><span style="letter-spacing:-0.65px;transform:scale(.93,.9);padding-left:0">124</span></div><div class="c" style="left:180px;top:98px;width:15px;height:14px;font-size:10px;line-height:11px;color:#a0a0a0;border-right:1px solid transparent;border-bottom:1px solid #c4c4c4"><span style="letter-spacing:-0.65px;transform:scale(.93,.9);padding-left:0">125</span></div><div class="c" style="left:195px;top:98px;width:15px;height:14px;font-size:10px;line-height:11px;color:#a0a0a0;border-right:1px solid transparent;border-bottom:1px solid #c4c4c4"><span style="letter-spacing:-0.65px;transform:scale(.93,.9);padding-left:0">126</span></div><div class="c" style="left:210px;top:98px;width:15px;height:14px;font-size:10px;line-height:11px;color:#a0a0a0;border-right:1px solid transparent;border-bottom:1px solid #c4c4c4"><span style="letter-spacing:-0.65px;transform:scale(.93,.9);padding-left:0">127</span></div><div class="c" style="left:225px;top:98px;width:15px;height:14px;font-size:10px;line-height:11px;color:#a0a0a0;border-right:1px solid transparent;border-bottom:1px solid #c4c4c4"><span style="letter-spacing:-0.65px;transform:scale(.93,.9);padding-left:0">128</span></div></div>
<span class="t" style="left:428px;top:453px;font-size:12px;color:#000;transform:scaleX(0.88);">Linie sperrt GONG:</span>
<div class="" style="left:525px;top:451px;width:40px;height:21px;background:#fff;box-sizing:border-box;border-top:1px solid #a0a0a0;border-left:1px solid #a0a0a0;border-right:1px solid #fff;border-bottom:1px solid #fff"></div>
<div class="" style="left:526px;top:452px;width:38px;height:19px;box-sizing:border-box;border-top:1px solid #696969;border-left:1px solid #696969;border-right:1px solid #e3e3e3;border-bottom:1px solid #e3e3e3"></div>
<div class="" style="left:548px;top:453px;width:15px;height:8px;background:#f0f0f0;box-sizing:border-box;border-top:1px solid #fff;border-left:1px solid #fff;border-right:1px solid #696969;border-bottom:1px solid #696969"></div>
<div class="" style="left:549px;top:454px;width:13px;height:6px;box-sizing:border-box;border-top:1px solid #e3e3e3;border-left:1px solid #e3e3e3;border-right:1px solid #a0a0a0;border-bottom:1px solid #a0a0a0"></div>
<div class="" style="left:548px;top:461px;width:15px;height:9px;background:#f0f0f0;box-sizing:border-box;border-top:1px solid #fff;border-left:1px solid #fff;border-right:1px solid #696969;border-bottom:1px solid #696969"></div>
<div class="" style="left:549px;top:462px;width:13px;height:7px;box-sizing:border-box;border-top:1px solid #e3e3e3;border-left:1px solid #e3e3e3;border-right:1px solid #a0a0a0;border-bottom:1px solid #a0a0a0"></div>
<div class="" style="left:555px;top:455px;width:1px;height:1px;background:#000"></div>
<div class="" style="left:554px;top:456px;width:3px;height:1px;background:#000"></div>
<div class="" style="left:553px;top:457px;width:5px;height:1px;background:#000"></div>
<div class="" style="left:552px;top:458px;width:7px;height:1px;background:#000"></div>
<div class="" style="left:552px;top:463px;width:7px;height:1px;background:#000"></div>
<div class="" style="left:553px;top:464px;width:5px;height:1px;background:#000"></div>
<div class="" style="left:554px;top:465px;width:3px;height:1px;background:#000"></div>
<div class="" style="left:555px;top:466px;width:1px;height:1px;background:#000"></div>
<span class="t" style="left:529px;top:454px;font-size:12px;color:#000;transform:scaleX(0.88);">0</span>
<span class="t" style="left:575px;top:453px;font-size:12px;color:#000;transform:scaleX(0.88);">Sperrzeit:</span>
<div class="" style="left:633px;top:451px;width:40px;height:21px;background:#fff;box-sizing:border-box;border-top:1px solid #a0a0a0;border-left:1px solid #a0a0a0;border-right:1px solid #fff;border-bottom:1px solid #fff"></div>
<div class="" style="left:634px;top:452px;width:38px;height:19px;box-sizing:border-box;border-top:1px solid #696969;border-left:1px solid #696969;border-right:1px solid #e3e3e3;border-bottom:1px solid #e3e3e3"></div>
<div class="" style="left:656px;top:453px;width:15px;height:8px;background:#f0f0f0;box-sizing:border-box;border-top:1px solid #fff;border-left:1px solid #fff;border-right:1px solid #696969;border-bottom:1px solid #696969"></div>
<div class="" style="left:657px;top:454px;width:13px;height:6px;box-sizing:border-box;border-top:1px solid #e3e3e3;border-left:1px solid #e3e3e3;border-right:1px solid #a0a0a0;border-bottom:1px solid #a0a0a0"></div>
<div class="" style="left:656px;top:461px;width:15px;height:9px;background:#f0f0f0;box-sizing:border-box;border-top:1px solid #fff;border-left:1px solid #fff;border-right:1px solid #696969;border-bottom:1px solid #696969"></div>
<div class="" style="left:657px;top:462px;width:13px;height:7px;box-sizing:border-box;border-top:1px solid #e3e3e3;border-left:1px solid #e3e3e3;border-right:1px solid #a0a0a0;border-bottom:1px solid #a0a0a0"></div>
<div class="" style="left:663px;top:455px;width:1px;height:1px;background:#000"></div>
<div class="" style="left:662px;top:456px;width:3px;height:1px;background:#000"></div>
<div class="" style="left:661px;top:457px;width:5px;height:1px;background:#000"></div>
<div class="" style="left:660px;top:458px;width:7px;height:1px;background:#000"></div>
<div class="" style="left:660px;top:463px;width:7px;height:1px;background:#000"></div>
<div class="" style="left:661px;top:464px;width:5px;height:1px;background:#000"></div>
<div class="" style="left:662px;top:465px;width:3px;height:1px;background:#000"></div>
<div class="" style="left:663px;top:466px;width:1px;height:1px;background:#000"></div>
<span class="t" style="left:637px;top:454px;font-size:12px;color:#000;transform:scaleX(0.88);">0</span>
<div class="" style="left:422px;top:475px;width:252px;height:1px;background:#fff"></div>
<div class="" style="left:422px;top:476px;width:252px;height:1px;background:#a0a0a0"></div>
<span class="t" style="left:426px;top:475px;font-size:12px;color:#000;transform:scaleX(0.88);">Schnell Scharf in Bereichen:</span>
<div class="" style="left:426px;top:489px;width:243px;height:30px;background:#fff;box-sizing:border-box;border-top:1px solid #808080;border-left:1px solid #808080;border-right:1px solid #fff;border-bottom:1px solid #fff"></div>
<div class="" style="left:427px;top:490px;width:241px;height:28px;box-sizing:border-box;border-top:1px solid #5f5f5f;border-left:1px solid #5f5f5f;"></div>
<div class="" style="left:428px;top:491px;width:240px;height:27px;overflow:hidden"><div class="c" style="left:0px;top:0px;width:15px;height:14px;font-size:12px;line-height:14px;color:#000;background:#ff9f10;border-right:1px solid #c4c4c4;border-bottom:1px solid #c4c4c4"><span style="letter-spacing:-0.3px;transform:scaleX(.88)">1</span></div><div class="c" style="left:15px;top:0px;width:15px;height:14px;font-size:12px;line-height:14px;color:#a0a0a0;border-right:1px solid #c4c4c4;border-bottom:1px solid #c4c4c4"><span style="letter-spacing:-0.3px;transform:scaleX(.88)">2</span></div><div class="c" style="left:30px;top:0px;width:15px;height:14px;font-size:12px;line-height:14px;color:#a0a0a0;border-right:1px solid #c4c4c4;border-bottom:1px solid #c4c4c4"><span style="letter-spacing:-0.3px;transform:scaleX(.88)">3</span></div><div class="c" style="left:45px;top:0px;width:15px;height:14px;font-size:12px;line-height:14px;color:#a0a0a0;border-right:1px solid #c4c4c4;border-bottom:1px solid #c4c4c4"><span style="letter-spacing:-0.3px;transform:scaleX(.88)">4</span></div><div class="c" style="left:60px;top:0px;width:15px;height:14px;font-size:12px;line-height:14px;color:#a0a0a0;border-right:1px solid #c4c4c4;border-bottom:1px solid #c4c4c4"><span style="letter-spacing:-0.3px;transform:scaleX(.88)">5</span></div><div class="c" style="left:75px;top:0px;width:15px;height:14px;font-size:12px;line-height:14px;color:#a0a0a0;border-right:1px solid #c4c4c4;border-bottom:1px solid #c4c4c4"><span style="letter-spacing:-0.3px;transform:scaleX(.88)">6</span></div><div class="c" style="left:90px;top:0px;width:15px;height:14px;font-size:12px;line-height:14px;color:#a0a0a0;border-right:1px solid #c4c4c4;border-bottom:1px solid #c4c4c4"><span style="letter-spacing:-0.3px;transform:scaleX(.88)">7</span></div><div class="c" style="left:105px;top:0px;width:15px;height:14px;font-size:12px;line-height:14px;color:#a0a0a0;border-right:1px solid #c4c4c4;border-bottom:1px solid #c4c4c4"><span style="letter-spacing:-0.3px;transform:scaleX(.88)">8</span></div><div class="c" style="left:120px;top:0px;width:15px;height:14px;font-size:12px;line-height:14px;color:#a0a0a0;border-right:1px solid #c4c4c4;border-bottom:1px solid #c4c4c4"><span style="letter-spacing:-0.3px;transform:scaleX(.88)">9</span></div><div class="c" style="left:135px;top:0px;width:15px;height:14px;font-size:12px;line-height:14px;color:#a0a0a0;border-right:1px solid #c4c4c4;border-bottom:1px solid #c4c4c4"><span style="letter-spacing:-0.3px;transform:scaleX(.88)">10</span></div><div class="c" style="left:150px;top:0px;width:15px;height:14px;font-size:12px;line-height:14px;color:#a0a0a0;border-right:1px solid #c4c4c4;border-bottom:1px solid #c4c4c4"><span style="letter-spacing:-0.3px;transform:scaleX(.88)">11</span></div><div class="c" style="left:165px;top:0px;width:15px;height:14px;font-size:12px;line-height:14px;color:#a0a0a0;border-right:1px solid #c4c4c4;border-bottom:1px solid #c4c4c4"><span style="letter-spacing:-0.3px;transform:scaleX(.88)">12</span></div><div class="c" style="left:180px;top:0px;width:15px;height:14px;font-size:12px;line-height:14px;color:#a0a0a0;border-right:1px solid #c4c4c4;border-bottom:1px solid #c4c4c4"><span style="letter-spacing:-0.3px;transform:scaleX(.88)">13</span></div><div class="c" style="left:195px;top:0px;width:15px;height:14px;font-size:12px;line-height:14px;color:#a0a0a0;border-right:1px solid #c4c4c4;border-bottom:1px solid #c4c4c4"><span style="letter-spacing:-0.3px;transform:scaleX(.88)">14</span></div><div class="c" style="left:210px;top:0px;width:15px;height:14px;font-size:12px;line-height:14px;color:#a0a0a0;border-right:1px solid #c4c4c4;border-bottom:1px solid #c4c4c4"><span style="letter-spacing:-0.3px;transform:scaleX(.88)">15</span></div><div class="c" style="left:225px;top:0px;width:15px;height:14px;font-size:12px;line-height:14px;color:#a0a0a0;border-right:1px solid #c4c4c4;border-bottom:1px solid #c4c4c4"><span style="letter-spacing:-0.3px;transform:scaleX(.88)">16</span></div><div class="c" style="left:0px;top:14px;width:15px;height:14px;font-size:12px;line-height:14px;color:#a0a0a0;border-right:1px solid #c4c4c4;border-bottom:1px solid #c4c4c4"><span style="letter-spacing:-0.3px;transform:scaleX(.88)">17</span></div><div class="c" style="left:15px;top:14px;width:15px;height:14px;font-size:12px;line-height:14px;color:#a0a0a0;border-right:1px solid #c4c4c4;border-bottom:1px solid #c4c4c4"><span style="letter-spacing:-0.3px;transform:scaleX(.88)">18</span></div><div class="c" style="left:30px;top:14px;width:15px;height:14px;font-size:12px;line-height:14px;color:#a0a0a0;border-right:1px solid #c4c4c4;border-bottom:1px solid #c4c4c4"><span style="letter-spacing:-0.3px;transform:scaleX(.88)">19</span></div><div class="c" style="left:45px;top:14px;width:15px;height:14px;font-size:12px;line-height:14px;color:#a0a0a0;border-right:1px solid #c4c4c4;border-bottom:1px solid #c4c4c4"><span style="letter-spacing:-0.3px;transform:scaleX(.88)">20</span></div><div class="c" style="left:60px;top:14px;width:15px;height:14px;font-size:12px;line-height:14px;color:#a0a0a0;border-right:1px solid #c4c4c4;border-bottom:1px solid #c4c4c4"><span style="letter-spacing:-0.3px;transform:scaleX(.88)">21</span></div><div class="c" style="left:75px;top:14px;width:15px;height:14px;font-size:12px;line-height:14px;color:#a0a0a0;border-right:1px solid #c4c4c4;border-bottom:1px solid #c4c4c4"><span style="letter-spacing:-0.3px;transform:scaleX(.88)">22</span></div><div class="c" style="left:90px;top:14px;width:15px;height:14px;font-size:12px;line-height:14px;color:#a0a0a0;border-right:1px solid #c4c4c4;border-bottom:1px solid #c4c4c4"><span style="letter-spacing:-0.3px;transform:scaleX(.88)">23</span></div><div class="c" style="left:105px;top:14px;width:15px;height:14px;font-size:12px;line-height:14px;color:#a0a0a0;border-right:1px solid #c4c4c4;border-bottom:1px solid #c4c4c4"><span style="letter-spacing:-0.3px;transform:scaleX(.88)">24</span></div><div class="c" style="left:120px;top:14px;width:15px;height:14px;font-size:12px;line-height:14px;color:#a0a0a0;border-right:1px solid #c4c4c4;border-bottom:1px solid #c4c4c4"><span style="letter-spacing:-0.3px;transform:scaleX(.88)">25</span></div><div class="c" style="left:135px;top:14px;width:15px;height:14px;font-size:12px;line-height:14px;color:#a0a0a0;border-right:1px solid #c4c4c4;border-bottom:1px solid #c4c4c4"><span style="letter-spacing:-0.3px;transform:scaleX(.88)">26</span></div><div class="c" style="left:150px;top:14px;width:15px;height:14px;font-size:12px;line-height:14px;color:#a0a0a0;border-right:1px solid #c4c4c4;border-bottom:1px solid #c4c4c4"><span style="letter-spacing:-0.3px;transform:scaleX(.88)">27</span></div><div class="c" style="left:165px;top:14px;width:15px;height:14px;font-size:12px;line-height:14px;color:#a0a0a0;border-right:1px solid #c4c4c4;border-bottom:1px solid #c4c4c4"><span style="letter-spacing:-0.3px;transform:scaleX(.88)">28</span></div><div class="c" style="left:180px;top:14px;width:15px;height:14px;font-size:12px;line-height:14px;color:#a0a0a0;border-right:1px solid #c4c4c4;border-bottom:1px solid #c4c4c4"><span style="letter-spacing:-0.3px;transform:scaleX(.88)">29</span></div><div class="c" style="left:195px;top:14px;width:15px;height:14px;font-size:12px;line-height:14px;color:#a0a0a0;border-right:1px solid #c4c4c4;border-bottom:1px solid #c4c4c4"><span style="letter-spacing:-0.3px;transform:scaleX(.88)">30</span></div><div class="c" style="left:210px;top:14px;width:15px;height:14px;font-size:12px;line-height:14px;color:#a0a0a0;border-right:1px solid #c4c4c4;border-bottom:1px solid #c4c4c4"><span style="letter-spacing:-0.3px;transform:scaleX(.88)">31</span></div><div class="c" style="left:225px;top:14px;width:15px;height:14px;font-size:12px;line-height:14px;color:#a0a0a0;border-right:1px solid #c4c4c4;border-bottom:1px solid #c4c4c4"><span style="letter-spacing:-0.3px;transform:scaleX(.88)">32</span></div></div>
<div class="" style="left:422px;top:522px;width:252px;height:1px;background:#fff"></div>
<div class="" style="left:422px;top:523px;width:252px;height:1px;background:#a0a0a0"></div>
<span class="t" style="left:428px;top:522px;font-size:12px;color:#000;transform:scaleX(0.88);">Eingangsverzögerung in Bereich anzeigen:</span>
<div class="" style="left:426px;top:536px;width:243px;height:30px;background:#ff9f10;box-sizing:border-box;border-top:1px solid #808080;border-left:1px solid #808080;border-right:1px solid #fff;border-bottom:1px solid #fff"></div>
<div class="" style="left:427px;top:537px;width:241px;height:28px;box-sizing:border-box;border-top:1px solid #8a6a3a;border-left:1px solid #8a6a3a;"></div>
<div class="" style="left:428px;top:538px;width:240px;height:27px;overflow:hidden"><div class="c" style="left:0px;top:0px;width:15px;height:14px;font-size:12px;line-height:14px;color:#000;border-right:1px solid #ffc46c;border-bottom:1px solid #ffc46c"><span style="letter-spacing:-0.3px;transform:scaleX(.88)">1</span></div><div class="c" style="left:15px;top:0px;width:15px;height:14px;font-size:12px;line-height:14px;color:#b48e58;border-right:1px solid #ffc46c;border-bottom:1px solid #ffc46c"><span style="letter-spacing:-0.3px;transform:scaleX(.88)">2</span></div><div class="c" style="left:30px;top:0px;width:15px;height:14px;font-size:12px;line-height:14px;color:#b48e58;border-right:1px solid #ffc46c;border-bottom:1px solid #ffc46c"><span style="letter-spacing:-0.3px;transform:scaleX(.88)">3</span></div><div class="c" style="left:45px;top:0px;width:15px;height:14px;font-size:12px;line-height:14px;color:#b48e58;border-right:1px solid #ffc46c;border-bottom:1px solid #ffc46c"><span style="letter-spacing:-0.3px;transform:scaleX(.88)">4</span></div><div class="c" style="left:60px;top:0px;width:15px;height:14px;font-size:12px;line-height:14px;color:#b48e58;border-right:1px solid #ffc46c;border-bottom:1px solid #ffc46c"><span style="letter-spacing:-0.3px;transform:scaleX(.88)">5</span></div><div class="c" style="left:75px;top:0px;width:15px;height:14px;font-size:12px;line-height:14px;color:#b48e58;border-right:1px solid #ffc46c;border-bottom:1px solid #ffc46c"><span style="letter-spacing:-0.3px;transform:scaleX(.88)">6</span></div><div class="c" style="left:90px;top:0px;width:15px;height:14px;font-size:12px;line-height:14px;color:#b48e58;border-right:1px solid #ffc46c;border-bottom:1px solid #ffc46c"><span style="letter-spacing:-0.3px;transform:scaleX(.88)">7</span></div><div class="c" style="left:105px;top:0px;width:15px;height:14px;font-size:12px;line-height:14px;color:#b48e58;border-right:1px solid #ffc46c;border-bottom:1px solid #ffc46c"><span style="letter-spacing:-0.3px;transform:scaleX(.88)">8</span></div><div class="c" style="left:120px;top:0px;width:15px;height:14px;font-size:12px;line-height:14px;color:#b48e58;border-right:1px solid #ffc46c;border-bottom:1px solid #ffc46c"><span style="letter-spacing:-0.3px;transform:scaleX(.88)">9</span></div><div class="c" style="left:135px;top:0px;width:15px;height:14px;font-size:12px;line-height:14px;color:#b48e58;border-right:1px solid #ffc46c;border-bottom:1px solid #ffc46c"><span style="letter-spacing:-0.3px;transform:scaleX(.88)">10</span></div><div class="c" style="left:150px;top:0px;width:15px;height:14px;font-size:12px;line-height:14px;color:#b48e58;border-right:1px solid #ffc46c;border-bottom:1px solid #ffc46c"><span style="letter-spacing:-0.3px;transform:scaleX(.88)">11</span></div><div class="c" style="left:165px;top:0px;width:15px;height:14px;font-size:12px;line-height:14px;color:#b48e58;border-right:1px solid #ffc46c;border-bottom:1px solid #ffc46c"><span style="letter-spacing:-0.3px;transform:scaleX(.88)">12</span></div><div class="c" style="left:180px;top:0px;width:15px;height:14px;font-size:12px;line-height:14px;color:#b48e58;border-right:1px solid #ffc46c;border-bottom:1px solid #ffc46c"><span style="letter-spacing:-0.3px;transform:scaleX(.88)">13</span></div><div class="c" style="left:195px;top:0px;width:15px;height:14px;font-size:12px;line-height:14px;color:#b48e58;border-right:1px solid #ffc46c;border-bottom:1px solid #ffc46c"><span style="letter-spacing:-0.3px;transform:scaleX(.88)">14</span></div><div class="c" style="left:210px;top:0px;width:15px;height:14px;font-size:12px;line-height:14px;color:#b48e58;border-right:1px solid #ffc46c;border-bottom:1px solid #ffc46c"><span style="letter-spacing:-0.3px;transform:scaleX(.88)">15</span></div><div class="c" style="left:225px;top:0px;width:15px;height:14px;font-size:12px;line-height:14px;color:#b48e58;border-right:1px solid #ffc46c;border-bottom:1px solid #ffc46c"><span style="letter-spacing:-0.3px;transform:scaleX(.88)">16</span></div><div class="c" style="left:0px;top:14px;width:15px;height:14px;font-size:12px;line-height:14px;color:#b48e58;border-right:1px solid #ffc46c;border-bottom:1px solid #ffc46c"><span style="letter-spacing:-0.3px;transform:scaleX(.88)">17</span></div><div class="c" style="left:15px;top:14px;width:15px;height:14px;font-size:12px;line-height:14px;color:#b48e58;border-right:1px solid #ffc46c;border-bottom:1px solid #ffc46c"><span style="letter-spacing:-0.3px;transform:scaleX(.88)">18</span></div><div class="c" style="left:30px;top:14px;width:15px;height:14px;font-size:12px;line-height:14px;color:#b48e58;border-right:1px solid #ffc46c;border-bottom:1px solid #ffc46c"><span style="letter-spacing:-0.3px;transform:scaleX(.88)">19</span></div><div class="c" style="left:45px;top:14px;width:15px;height:14px;font-size:12px;line-height:14px;color:#b48e58;border-right:1px solid #ffc46c;border-bottom:1px solid #ffc46c"><span style="letter-spacing:-0.3px;transform:scaleX(.88)">20</span></div><div class="c" style="left:60px;top:14px;width:15px;height:14px;font-size:12px;line-height:14px;color:#b48e58;border-right:1px solid #ffc46c;border-bottom:1px solid #ffc46c"><span style="letter-spacing:-0.3px;transform:scaleX(.88)">21</span></div><div class="c" style="left:75px;top:14px;width:15px;height:14px;font-size:12px;line-height:14px;color:#b48e58;border-right:1px solid #ffc46c;border-bottom:1px solid #ffc46c"><span style="letter-spacing:-0.3px;transform:scaleX(.88)">22</span></div><div class="c" style="left:90px;top:14px;width:15px;height:14px;font-size:12px;line-height:14px;color:#b48e58;border-right:1px solid #ffc46c;border-bottom:1px solid #ffc46c"><span style="letter-spacing:-0.3px;transform:scaleX(.88)">23</span></div><div class="c" style="left:105px;top:14px;width:15px;height:14px;font-size:12px;line-height:14px;color:#b48e58;border-right:1px solid #ffc46c;border-bottom:1px solid #ffc46c"><span style="letter-spacing:-0.3px;transform:scaleX(.88)">24</span></div><div class="c" style="left:120px;top:14px;width:15px;height:14px;font-size:12px;line-height:14px;color:#b48e58;border-right:1px solid #ffc46c;border-bottom:1px solid #ffc46c"><span style="letter-spacing:-0.3px;transform:scaleX(.88)">25</span></div><div class="c" style="left:135px;top:14px;width:15px;height:14px;font-size:12px;line-height:14px;color:#b48e58;border-right:1px solid #ffc46c;border-bottom:1px solid #ffc46c"><span style="letter-spacing:-0.3px;transform:scaleX(.88)">26</span></div><div class="c" style="left:150px;top:14px;width:15px;height:14px;font-size:12px;line-height:14px;color:#b48e58;border-right:1px solid #ffc46c;border-bottom:1px solid #ffc46c"><span style="letter-spacing:-0.3px;transform:scaleX(.88)">27</span></div><div class="c" style="left:165px;top:14px;width:15px;height:14px;font-size:12px;line-height:14px;color:#b48e58;border-right:1px solid #ffc46c;border-bottom:1px solid #ffc46c"><span style="letter-spacing:-0.3px;transform:scaleX(.88)">28</span></div><div class="c" style="left:180px;top:14px;width:15px;height:14px;font-size:12px;line-height:14px;color:#b48e58;border-right:1px solid #ffc46c;border-bottom:1px solid #ffc46c"><span style="letter-spacing:-0.3px;transform:scaleX(.88)">29</span></div><div class="c" style="left:195px;top:14px;width:15px;height:14px;font-size:12px;line-height:14px;color:#b48e58;border-right:1px solid #ffc46c;border-bottom:1px solid #ffc46c"><span style="letter-spacing:-0.3px;transform:scaleX(.88)">30</span></div><div class="c" style="left:210px;top:14px;width:15px;height:14px;font-size:12px;line-height:14px;color:#b48e58;border-right:1px solid #ffc46c;border-bottom:1px solid #ffc46c"><span style="letter-spacing:-0.3px;transform:scaleX(.88)">31</span></div><div class="c" style="left:225px;top:14px;width:15px;height:14px;font-size:12px;line-height:14px;color:#b48e58;border-right:1px solid #ffc46c;border-bottom:1px solid #ffc46c"><span style="letter-spacing:-0.3px;transform:scaleX(.88)">32</span></div></div>
<div class="" style="left:422px;top:568px;width:252px;height:1px;background:#fff"></div>
<div class="" style="left:422px;top:569px;width:252px;height:1px;background:#a0a0a0"></div>
<span class="t" style="left:426px;top:568px;font-size:12px;color:#000;transform:scaleX(0.88);">Ausgangsverzögerung in Bereich anzeigen:</span>
<div class="" style="left:426px;top:582px;width:243px;height:30px;background:#ff9f10;box-sizing:border-box;border-top:1px solid #808080;border-left:1px solid #808080;border-right:1px solid #fff;border-bottom:1px solid #fff"></div>
<div class="" style="left:427px;top:583px;width:241px;height:28px;box-sizing:border-box;border-top:1px solid #8a6a3a;border-left:1px solid #8a6a3a;"></div>
<div class="" style="left:428px;top:584px;width:240px;height:27px;overflow:hidden"><div class="c" style="left:0px;top:0px;width:15px;height:14px;font-size:12px;line-height:14px;color:#000;border-right:1px solid #ffc46c;border-bottom:1px solid #ffc46c"><span style="letter-spacing:-0.3px;transform:scaleX(.88)">1</span></div><div class="c" style="left:15px;top:0px;width:15px;height:14px;font-size:12px;line-height:14px;color:#b48e58;border-right:1px solid #ffc46c;border-bottom:1px solid #ffc46c"><span style="letter-spacing:-0.3px;transform:scaleX(.88)">2</span></div><div class="c" style="left:30px;top:0px;width:15px;height:14px;font-size:12px;line-height:14px;color:#b48e58;border-right:1px solid #ffc46c;border-bottom:1px solid #ffc46c"><span style="letter-spacing:-0.3px;transform:scaleX(.88)">3</span></div><div class="c" style="left:45px;top:0px;width:15px;height:14px;font-size:12px;line-height:14px;color:#b48e58;border-right:1px solid #ffc46c;border-bottom:1px solid #ffc46c"><span style="letter-spacing:-0.3px;transform:scaleX(.88)">4</span></div><div class="c" style="left:60px;top:0px;width:15px;height:14px;font-size:12px;line-height:14px;color:#b48e58;border-right:1px solid #ffc46c;border-bottom:1px solid #ffc46c"><span style="letter-spacing:-0.3px;transform:scaleX(.88)">5</span></div><div class="c" style="left:75px;top:0px;width:15px;height:14px;font-size:12px;line-height:14px;color:#b48e58;border-right:1px solid #ffc46c;border-bottom:1px solid #ffc46c"><span style="letter-spacing:-0.3px;transform:scaleX(.88)">6</span></div><div class="c" style="left:90px;top:0px;width:15px;height:14px;font-size:12px;line-height:14px;color:#b48e58;border-right:1px solid #ffc46c;border-bottom:1px solid #ffc46c"><span style="letter-spacing:-0.3px;transform:scaleX(.88)">7</span></div><div class="c" style="left:105px;top:0px;width:15px;height:14px;font-size:12px;line-height:14px;color:#b48e58;border-right:1px solid #ffc46c;border-bottom:1px solid #ffc46c"><span style="letter-spacing:-0.3px;transform:scaleX(.88)">8</span></div><div class="c" style="left:120px;top:0px;width:15px;height:14px;font-size:12px;line-height:14px;color:#b48e58;border-right:1px solid #ffc46c;border-bottom:1px solid #ffc46c"><span style="letter-spacing:-0.3px;transform:scaleX(.88)">9</span></div><div class="c" style="left:135px;top:0px;width:15px;height:14px;font-size:12px;line-height:14px;color:#b48e58;border-right:1px solid #ffc46c;border-bottom:1px solid #ffc46c"><span style="letter-spacing:-0.3px;transform:scaleX(.88)">10</span></div><div class="c" style="left:150px;top:0px;width:15px;height:14px;font-size:12px;line-height:14px;color:#b48e58;border-right:1px solid #ffc46c;border-bottom:1px solid #ffc46c"><span style="letter-spacing:-0.3px;transform:scaleX(.88)">11</span></div><div class="c" style="left:165px;top:0px;width:15px;height:14px;font-size:12px;line-height:14px;color:#b48e58;border-right:1px solid #ffc46c;border-bottom:1px solid #ffc46c"><span style="letter-spacing:-0.3px;transform:scaleX(.88)">12</span></div><div class="c" style="left:180px;top:0px;width:15px;height:14px;font-size:12px;line-height:14px;color:#b48e58;border-right:1px solid #ffc46c;border-bottom:1px solid #ffc46c"><span style="letter-spacing:-0.3px;transform:scaleX(.88)">13</span></div><div class="c" style="left:195px;top:0px;width:15px;height:14px;font-size:12px;line-height:14px;color:#b48e58;border-right:1px solid #ffc46c;border-bottom:1px solid #ffc46c"><span style="letter-spacing:-0.3px;transform:scaleX(.88)">14</span></div><div class="c" style="left:210px;top:0px;width:15px;height:14px;font-size:12px;line-height:14px;color:#b48e58;border-right:1px solid #ffc46c;border-bottom:1px solid #ffc46c"><span style="letter-spacing:-0.3px;transform:scaleX(.88)">15</span></div><div class="c" style="left:225px;top:0px;width:15px;height:14px;font-size:12px;line-height:14px;color:#b48e58;border-right:1px solid #ffc46c;border-bottom:1px solid #ffc46c"><span style="letter-spacing:-0.3px;transform:scaleX(.88)">16</span></div><div class="c" style="left:0px;top:14px;width:15px;height:14px;font-size:12px;line-height:14px;color:#b48e58;border-right:1px solid #ffc46c;border-bottom:1px solid #ffc46c"><span style="letter-spacing:-0.3px;transform:scaleX(.88)">17</span></div><div class="c" style="left:15px;top:14px;width:15px;height:14px;font-size:12px;line-height:14px;color:#b48e58;border-right:1px solid #ffc46c;border-bottom:1px solid #ffc46c"><span style="letter-spacing:-0.3px;transform:scaleX(.88)">18</span></div><div class="c" style="left:30px;top:14px;width:15px;height:14px;font-size:12px;line-height:14px;color:#b48e58;border-right:1px solid #ffc46c;border-bottom:1px solid #ffc46c"><span style="letter-spacing:-0.3px;transform:scaleX(.88)">19</span></div><div class="c" style="left:45px;top:14px;width:15px;height:14px;font-size:12px;line-height:14px;color:#b48e58;border-right:1px solid #ffc46c;border-bottom:1px solid #ffc46c"><span style="letter-spacing:-0.3px;transform:scaleX(.88)">20</span></div><div class="c" style="left:60px;top:14px;width:15px;height:14px;font-size:12px;line-height:14px;color:#b48e58;border-right:1px solid #ffc46c;border-bottom:1px solid #ffc46c"><span style="letter-spacing:-0.3px;transform:scaleX(.88)">21</span></div><div class="c" style="left:75px;top:14px;width:15px;height:14px;font-size:12px;line-height:14px;color:#b48e58;border-right:1px solid #ffc46c;border-bottom:1px solid #ffc46c"><span style="letter-spacing:-0.3px;transform:scaleX(.88)">22</span></div><div class="c" style="left:90px;top:14px;width:15px;height:14px;font-size:12px;line-height:14px;color:#b48e58;border-right:1px solid #ffc46c;border-bottom:1px solid #ffc46c"><span style="letter-spacing:-0.3px;transform:scaleX(.88)">23</span></div><div class="c" style="left:105px;top:14px;width:15px;height:14px;font-size:12px;line-height:14px;color:#b48e58;border-right:1px solid #ffc46c;border-bottom:1px solid #ffc46c"><span style="letter-spacing:-0.3px;transform:scaleX(.88)">24</span></div><div class="c" style="left:120px;top:14px;width:15px;height:14px;font-size:12px;line-height:14px;color:#b48e58;border-right:1px solid #ffc46c;border-bottom:1px solid #ffc46c"><span style="letter-spacing:-0.3px;transform:scaleX(.88)">25</span></div><div class="c" style="left:135px;top:14px;width:15px;height:14px;font-size:12px;line-height:14px;color:#b48e58;border-right:1px solid #ffc46c;border-bottom:1px solid #ffc46c"><span style="letter-spacing:-0.3px;transform:scaleX(.88)">26</span></div><div class="c" style="left:150px;top:14px;width:15px;height:14px;font-size:12px;line-height:14px;color:#b48e58;border-right:1px solid #ffc46c;border-bottom:1px solid #ffc46c"><span style="letter-spacing:-0.3px;transform:scaleX(.88)">27</span></div><div class="c" style="left:165px;top:14px;width:15px;height:14px;font-size:12px;line-height:14px;color:#b48e58;border-right:1px solid #ffc46c;border-bottom:1px solid #ffc46c"><span style="letter-spacing:-0.3px;transform:scaleX(.88)">28</span></div><div class="c" style="left:180px;top:14px;width:15px;height:14px;font-size:12px;line-height:14px;color:#b48e58;border-right:1px solid #ffc46c;border-bottom:1px solid #ffc46c"><span style="letter-spacing:-0.3px;transform:scaleX(.88)">29</span></div><div class="c" style="left:195px;top:14px;width:15px;height:14px;font-size:12px;line-height:14px;color:#b48e58;border-right:1px solid #ffc46c;border-bottom:1px solid #ffc46c"><span style="letter-spacing:-0.3px;transform:scaleX(.88)">30</span></div><div class="c" style="left:210px;top:14px;width:15px;height:14px;font-size:12px;line-height:14px;color:#b48e58;border-right:1px solid #ffc46c;border-bottom:1px solid #ffc46c"><span style="letter-spacing:-0.3px;transform:scaleX(.88)">31</span></div><div class="c" style="left:225px;top:14px;width:15px;height:14px;font-size:12px;line-height:14px;color:#b48e58;border-right:1px solid #ffc46c;border-bottom:1px solid #ffc46c"><span style="letter-spacing:-0.3px;transform:scaleX(.88)">32</span></div></div>
<div class="" style="left:422px;top:612px;width:252px;height:1px;background:#fff"></div>
<div class="" style="left:422px;top:613px;width:252px;height:1px;background:#a0a0a0"></div>
<span class="t" style="left:426px;top:614px;font-size:12px;color:#000;transform:scaleX(0.88);">Eingangsverzögerung in Bereich signalisieren:</span>
<div class="" style="left:426px;top:628px;width:243px;height:30px;background:#ff9f10;box-sizing:border-box;border-top:1px solid #808080;border-left:1px solid #808080;border-right:1px solid #fff;border-bottom:1px solid #fff"></div>
<div class="" style="left:427px;top:629px;width:241px;height:28px;box-sizing:border-box;border-top:1px solid #8a6a3a;border-left:1px solid #8a6a3a;"></div>
<div class="" style="left:428px;top:630px;width:240px;height:27px;overflow:hidden"><div class="c" style="left:0px;top:0px;width:15px;height:14px;font-size:12px;line-height:14px;color:#000;border-right:1px solid #ffc46c;border-bottom:1px solid #ffc46c"><span style="letter-spacing:-0.3px;transform:scaleX(.88)">1</span></div><div class="c" style="left:15px;top:0px;width:15px;height:14px;font-size:12px;line-height:14px;color:#b48e58;border-right:1px solid #ffc46c;border-bottom:1px solid #ffc46c"><span style="letter-spacing:-0.3px;transform:scaleX(.88)">2</span></div><div class="c" style="left:30px;top:0px;width:15px;height:14px;font-size:12px;line-height:14px;color:#b48e58;border-right:1px solid #ffc46c;border-bottom:1px solid #ffc46c"><span style="letter-spacing:-0.3px;transform:scaleX(.88)">3</span></div><div class="c" style="left:45px;top:0px;width:15px;height:14px;font-size:12px;line-height:14px;color:#b48e58;border-right:1px solid #ffc46c;border-bottom:1px solid #ffc46c"><span style="letter-spacing:-0.3px;transform:scaleX(.88)">4</span></div><div class="c" style="left:60px;top:0px;width:15px;height:14px;font-size:12px;line-height:14px;color:#b48e58;border-right:1px solid #ffc46c;border-bottom:1px solid #ffc46c"><span style="letter-spacing:-0.3px;transform:scaleX(.88)">5</span></div><div class="c" style="left:75px;top:0px;width:15px;height:14px;font-size:12px;line-height:14px;color:#b48e58;border-right:1px solid #ffc46c;border-bottom:1px solid #ffc46c"><span style="letter-spacing:-0.3px;transform:scaleX(.88)">6</span></div><div class="c" style="left:90px;top:0px;width:15px;height:14px;font-size:12px;line-height:14px;color:#b48e58;border-right:1px solid #ffc46c;border-bottom:1px solid #ffc46c"><span style="letter-spacing:-0.3px;transform:scaleX(.88)">7</span></div><div class="c" style="left:105px;top:0px;width:15px;height:14px;font-size:12px;line-height:14px;color:#b48e58;border-right:1px solid #ffc46c;border-bottom:1px solid #ffc46c"><span style="letter-spacing:-0.3px;transform:scaleX(.88)">8</span></div><div class="c" style="left:120px;top:0px;width:15px;height:14px;font-size:12px;line-height:14px;color:#b48e58;border-right:1px solid #ffc46c;border-bottom:1px solid #ffc46c"><span style="letter-spacing:-0.3px;transform:scaleX(.88)">9</span></div><div class="c" style="left:135px;top:0px;width:15px;height:14px;font-size:12px;line-height:14px;color:#b48e58;border-right:1px solid #ffc46c;border-bottom:1px solid #ffc46c"><span style="letter-spacing:-0.3px;transform:scaleX(.88)">10</span></div><div class="c" style="left:150px;top:0px;width:15px;height:14px;font-size:12px;line-height:14px;color:#b48e58;border-right:1px solid #ffc46c;border-bottom:1px solid #ffc46c"><span style="letter-spacing:-0.3px;transform:scaleX(.88)">11</span></div><div class="c" style="left:165px;top:0px;width:15px;height:14px;font-size:12px;line-height:14px;color:#b48e58;border-right:1px solid #ffc46c;border-bottom:1px solid #ffc46c"><span style="letter-spacing:-0.3px;transform:scaleX(.88)">12</span></div><div class="c" style="left:180px;top:0px;width:15px;height:14px;font-size:12px;line-height:14px;color:#b48e58;border-right:1px solid #ffc46c;border-bottom:1px solid #ffc46c"><span style="letter-spacing:-0.3px;transform:scaleX(.88)">13</span></div><div class="c" style="left:195px;top:0px;width:15px;height:14px;font-size:12px;line-height:14px;color:#b48e58;border-right:1px solid #ffc46c;border-bottom:1px solid #ffc46c"><span style="letter-spacing:-0.3px;transform:scaleX(.88)">14</span></div><div class="c" style="left:210px;top:0px;width:15px;height:14px;font-size:12px;line-height:14px;color:#b48e58;border-right:1px solid #ffc46c;border-bottom:1px solid #ffc46c"><span style="letter-spacing:-0.3px;transform:scaleX(.88)">15</span></div><div class="c" style="left:225px;top:0px;width:15px;height:14px;font-size:12px;line-height:14px;color:#b48e58;border-right:1px solid #ffc46c;border-bottom:1px solid #ffc46c"><span style="letter-spacing:-0.3px;transform:scaleX(.88)">16</span></div><div class="c" style="left:0px;top:14px;width:15px;height:14px;font-size:12px;line-height:14px;color:#b48e58;border-right:1px solid #ffc46c;border-bottom:1px solid #ffc46c"><span style="letter-spacing:-0.3px;transform:scaleX(.88)">17</span></div><div class="c" style="left:15px;top:14px;width:15px;height:14px;font-size:12px;line-height:14px;color:#b48e58;border-right:1px solid #ffc46c;border-bottom:1px solid #ffc46c"><span style="letter-spacing:-0.3px;transform:scaleX(.88)">18</span></div><div class="c" style="left:30px;top:14px;width:15px;height:14px;font-size:12px;line-height:14px;color:#b48e58;border-right:1px solid #ffc46c;border-bottom:1px solid #ffc46c"><span style="letter-spacing:-0.3px;transform:scaleX(.88)">19</span></div><div class="c" style="left:45px;top:14px;width:15px;height:14px;font-size:12px;line-height:14px;color:#b48e58;border-right:1px solid #ffc46c;border-bottom:1px solid #ffc46c"><span style="letter-spacing:-0.3px;transform:scaleX(.88)">20</span></div><div class="c" style="left:60px;top:14px;width:15px;height:14px;font-size:12px;line-height:14px;color:#b48e58;border-right:1px solid #ffc46c;border-bottom:1px solid #ffc46c"><span style="letter-spacing:-0.3px;transform:scaleX(.88)">21</span></div><div class="c" style="left:75px;top:14px;width:15px;height:14px;font-size:12px;line-height:14px;color:#b48e58;border-right:1px solid #ffc46c;border-bottom:1px solid #ffc46c"><span style="letter-spacing:-0.3px;transform:scaleX(.88)">22</span></div><div class="c" style="left:90px;top:14px;width:15px;height:14px;font-size:12px;line-height:14px;color:#b48e58;border-right:1px solid #ffc46c;border-bottom:1px solid #ffc46c"><span style="letter-spacing:-0.3px;transform:scaleX(.88)">23</span></div><div class="c" style="left:105px;top:14px;width:15px;height:14px;font-size:12px;line-height:14px;color:#b48e58;border-right:1px solid #ffc46c;border-bottom:1px solid #ffc46c"><span style="letter-spacing:-0.3px;transform:scaleX(.88)">24</span></div><div class="c" style="left:120px;top:14px;width:15px;height:14px;font-size:12px;line-height:14px;color:#b48e58;border-right:1px solid #ffc46c;border-bottom:1px solid #ffc46c"><span style="letter-spacing:-0.3px;transform:scaleX(.88)">25</span></div><div class="c" style="left:135px;top:14px;width:15px;height:14px;font-size:12px;line-height:14px;color:#b48e58;border-right:1px solid #ffc46c;border-bottom:1px solid #ffc46c"><span style="letter-spacing:-0.3px;transform:scaleX(.88)">26</span></div><div class="c" style="left:150px;top:14px;width:15px;height:14px;font-size:12px;line-height:14px;color:#b48e58;border-right:1px solid #ffc46c;border-bottom:1px solid #ffc46c"><span style="letter-spacing:-0.3px;transform:scaleX(.88)">27</span></div><div class="c" style="left:165px;top:14px;width:15px;height:14px;font-size:12px;line-height:14px;color:#b48e58;border-right:1px solid #ffc46c;border-bottom:1px solid #ffc46c"><span style="letter-spacing:-0.3px;transform:scaleX(.88)">28</span></div><div class="c" style="left:180px;top:14px;width:15px;height:14px;font-size:12px;line-height:14px;color:#b48e58;border-right:1px solid #ffc46c;border-bottom:1px solid #ffc46c"><span style="letter-spacing:-0.3px;transform:scaleX(.88)">29</span></div><div class="c" style="left:195px;top:14px;width:15px;height:14px;font-size:12px;line-height:14px;color:#b48e58;border-right:1px solid #ffc46c;border-bottom:1px solid #ffc46c"><span style="letter-spacing:-0.3px;transform:scaleX(.88)">30</span></div><div class="c" style="left:210px;top:14px;width:15px;height:14px;font-size:12px;line-height:14px;color:#b48e58;border-right:1px solid #ffc46c;border-bottom:1px solid #ffc46c"><span style="letter-spacing:-0.3px;transform:scaleX(.88)">31</span></div><div class="c" style="left:225px;top:14px;width:15px;height:14px;font-size:12px;line-height:14px;color:#b48e58;border-right:1px solid #ffc46c;border-bottom:1px solid #ffc46c"><span style="letter-spacing:-0.3px;transform:scaleX(.88)">32</span></div></div>
<div class="" style="left:422px;top:662px;width:252px;height:1px;background:#fff"></div>
<div class="" style="left:422px;top:663px;width:252px;height:1px;background:#a0a0a0"></div>
<span class="t" style="left:426px;top:665px;font-size:12px;color:#000;transform:scaleX(0.88);">Ausgangsverzögerung in Bereich signalisieren:</span>
<div class="" style="left:426px;top:678px;width:243px;height:30px;background:#ff9f10;box-sizing:border-box;border-top:1px solid #808080;border-left:1px solid #808080;border-right:1px solid #fff;border-bottom:1px solid #fff"></div>
<div class="" style="left:427px;top:679px;width:241px;height:28px;box-sizing:border-box;border-top:1px solid #8a6a3a;border-left:1px solid #8a6a3a;"></div>
<div class="" style="left:428px;top:680px;width:240px;height:27px;overflow:hidden"><div class="c" style="left:0px;top:0px;width:15px;height:14px;font-size:12px;line-height:14px;color:#000;border-right:1px solid #ffc46c;border-bottom:1px solid #ffc46c"><span style="letter-spacing:-0.3px;transform:scaleX(.88)">1</span></div><div class="c" style="left:15px;top:0px;width:15px;height:14px;font-size:12px;line-height:14px;color:#b48e58;border-right:1px solid #ffc46c;border-bottom:1px solid #ffc46c"><span style="letter-spacing:-0.3px;transform:scaleX(.88)">2</span></div><div class="c" style="left:30px;top:0px;width:15px;height:14px;font-size:12px;line-height:14px;color:#b48e58;border-right:1px solid #ffc46c;border-bottom:1px solid #ffc46c"><span style="letter-spacing:-0.3px;transform:scaleX(.88)">3</span></div><div class="c" style="left:45px;top:0px;width:15px;height:14px;font-size:12px;line-height:14px;color:#b48e58;border-right:1px solid #ffc46c;border-bottom:1px solid #ffc46c"><span style="letter-spacing:-0.3px;transform:scaleX(.88)">4</span></div><div class="c" style="left:60px;top:0px;width:15px;height:14px;font-size:12px;line-height:14px;color:#b48e58;border-right:1px solid #ffc46c;border-bottom:1px solid #ffc46c"><span style="letter-spacing:-0.3px;transform:scaleX(.88)">5</span></div><div class="c" style="left:75px;top:0px;width:15px;height:14px;font-size:12px;line-height:14px;color:#b48e58;border-right:1px solid #ffc46c;border-bottom:1px solid #ffc46c"><span style="letter-spacing:-0.3px;transform:scaleX(.88)">6</span></div><div class="c" style="left:90px;top:0px;width:15px;height:14px;font-size:12px;line-height:14px;color:#b48e58;border-right:1px solid #ffc46c;border-bottom:1px solid #ffc46c"><span style="letter-spacing:-0.3px;transform:scaleX(.88)">7</span></div><div class="c" style="left:105px;top:0px;width:15px;height:14px;font-size:12px;line-height:14px;color:#b48e58;border-right:1px solid #ffc46c;border-bottom:1px solid #ffc46c"><span style="letter-spacing:-0.3px;transform:scaleX(.88)">8</span></div><div class="c" style="left:120px;top:0px;width:15px;height:14px;font-size:12px;line-height:14px;color:#b48e58;border-right:1px solid #ffc46c;border-bottom:1px solid #ffc46c"><span style="letter-spacing:-0.3px;transform:scaleX(.88)">9</span></div><div class="c" style="left:135px;top:0px;width:15px;height:14px;font-size:12px;line-height:14px;color:#b48e58;border-right:1px solid #ffc46c;border-bottom:1px solid #ffc46c"><span style="letter-spacing:-0.3px;transform:scaleX(.88)">10</span></div><div class="c" style="left:150px;top:0px;width:15px;height:14px;font-size:12px;line-height:14px;color:#b48e58;border-right:1px solid #ffc46c;border-bottom:1px solid #ffc46c"><span style="letter-spacing:-0.3px;transform:scaleX(.88)">11</span></div><div class="c" style="left:165px;top:0px;width:15px;height:14px;font-size:12px;line-height:14px;color:#b48e58;border-right:1px solid #ffc46c;border-bottom:1px solid #ffc46c"><span style="letter-spacing:-0.3px;transform:scaleX(.88)">12</span></div><div class="c" style="left:180px;top:0px;width:15px;height:14px;font-size:12px;line-height:14px;color:#b48e58;border-right:1px solid #ffc46c;border-bottom:1px solid #ffc46c"><span style="letter-spacing:-0.3px;transform:scaleX(.88)">13</span></div><div class="c" style="left:195px;top:0px;width:15px;height:14px;font-size:12px;line-height:14px;color:#b48e58;border-right:1px solid #ffc46c;border-bottom:1px solid #ffc46c"><span style="letter-spacing:-0.3px;transform:scaleX(.88)">14</span></div><div class="c" style="left:210px;top:0px;width:15px;height:14px;font-size:12px;line-height:14px;color:#b48e58;border-right:1px solid #ffc46c;border-bottom:1px solid #ffc46c"><span style="letter-spacing:-0.3px;transform:scaleX(.88)">15</span></div><div class="c" style="left:225px;top:0px;width:15px;height:14px;font-size:12px;line-height:14px;color:#b48e58;border-right:1px solid #ffc46c;border-bottom:1px solid #ffc46c"><span style="letter-spacing:-0.3px;transform:scaleX(.88)">16</span></div><div class="c" style="left:0px;top:14px;width:15px;height:14px;font-size:12px;line-height:14px;color:#b48e58;border-right:1px solid #ffc46c;border-bottom:1px solid #ffc46c"><span style="letter-spacing:-0.3px;transform:scaleX(.88)">17</span></div><div class="c" style="left:15px;top:14px;width:15px;height:14px;font-size:12px;line-height:14px;color:#b48e58;border-right:1px solid #ffc46c;border-bottom:1px solid #ffc46c"><span style="letter-spacing:-0.3px;transform:scaleX(.88)">18</span></div><div class="c" style="left:30px;top:14px;width:15px;height:14px;font-size:12px;line-height:14px;color:#b48e58;border-right:1px solid #ffc46c;border-bottom:1px solid #ffc46c"><span style="letter-spacing:-0.3px;transform:scaleX(.88)">19</span></div><div class="c" style="left:45px;top:14px;width:15px;height:14px;font-size:12px;line-height:14px;color:#b48e58;border-right:1px solid #ffc46c;border-bottom:1px solid #ffc46c"><span style="letter-spacing:-0.3px;transform:scaleX(.88)">20</span></div><div class="c" style="left:60px;top:14px;width:15px;height:14px;font-size:12px;line-height:14px;color:#b48e58;border-right:1px solid #ffc46c;border-bottom:1px solid #ffc46c"><span style="letter-spacing:-0.3px;transform:scaleX(.88)">21</span></div><div class="c" style="left:75px;top:14px;width:15px;height:14px;font-size:12px;line-height:14px;color:#b48e58;border-right:1px solid #ffc46c;border-bottom:1px solid #ffc46c"><span style="letter-spacing:-0.3px;transform:scaleX(.88)">22</span></div><div class="c" style="left:90px;top:14px;width:15px;height:14px;font-size:12px;line-height:14px;color:#b48e58;border-right:1px solid #ffc46c;border-bottom:1px solid #ffc46c"><span style="letter-spacing:-0.3px;transform:scaleX(.88)">23</span></div><div class="c" style="left:105px;top:14px;width:15px;height:14px;font-size:12px;line-height:14px;color:#b48e58;border-right:1px solid #ffc46c;border-bottom:1px solid #ffc46c"><span style="letter-spacing:-0.3px;transform:scaleX(.88)">24</span></div><div class="c" style="left:120px;top:14px;width:15px;height:14px;font-size:12px;line-height:14px;color:#b48e58;border-right:1px solid #ffc46c;border-bottom:1px solid #ffc46c"><span style="letter-spacing:-0.3px;transform:scaleX(.88)">25</span></div><div class="c" style="left:135px;top:14px;width:15px;height:14px;font-size:12px;line-height:14px;color:#b48e58;border-right:1px solid #ffc46c;border-bottom:1px solid #ffc46c"><span style="letter-spacing:-0.3px;transform:scaleX(.88)">26</span></div><div class="c" style="left:150px;top:14px;width:15px;height:14px;font-size:12px;line-height:14px;color:#b48e58;border-right:1px solid #ffc46c;border-bottom:1px solid #ffc46c"><span style="letter-spacing:-0.3px;transform:scaleX(.88)">27</span></div><div class="c" style="left:165px;top:14px;width:15px;height:14px;font-size:12px;line-height:14px;color:#b48e58;border-right:1px solid #ffc46c;border-bottom:1px solid #ffc46c"><span style="letter-spacing:-0.3px;transform:scaleX(.88)">28</span></div><div class="c" style="left:180px;top:14px;width:15px;height:14px;font-size:12px;line-height:14px;color:#b48e58;border-right:1px solid #ffc46c;border-bottom:1px solid #ffc46c"><span style="letter-spacing:-0.3px;transform:scaleX(.88)">29</span></div><div class="c" style="left:195px;top:14px;width:15px;height:14px;font-size:12px;line-height:14px;color:#b48e58;border-right:1px solid #ffc46c;border-bottom:1px solid #ffc46c"><span style="letter-spacing:-0.3px;transform:scaleX(.88)">30</span></div><div class="c" style="left:210px;top:14px;width:15px;height:14px;font-size:12px;line-height:14px;color:#b48e58;border-right:1px solid #ffc46c;border-bottom:1px solid #ffc46c"><span style="letter-spacing:-0.3px;transform:scaleX(.88)">31</span></div><div class="c" style="left:225px;top:14px;width:15px;height:14px;font-size:12px;line-height:14px;color:#b48e58;border-right:1px solid #ffc46c;border-bottom:1px solid #ffc46c"><span style="letter-spacing:-0.3px;transform:scaleX(.88)">32</span></div></div>
<div class="" style="left:682px;top:126px;width:233px;height:86px;border:1px solid #fff;box-sizing:border-box"></div>
<div class="" style="left:681px;top:125px;width:233px;height:86px;border:1px solid #a0a0a0;box-sizing:border-box"></div>
<span class="t" style="left:687px;top:133px;font-size:12px;color:#000;transform:scaleX(0.8653);">Uhrzeitformat:</span>
<div class="" style="left:781px;top:130px;width:126px;height:21px;background:#fff;box-sizing:border-box;border-top:1px solid #a0a0a0;border-left:1px solid #a0a0a0;border-right:1px solid #fff;border-bottom:1px solid #fff"></div>
<div class="" style="left:782px;top:131px;width:124px;height:19px;box-sizing:border-box;border-top:1px solid #696969;border-left:1px solid #696969;border-right:1px solid #e3e3e3;border-bottom:1px solid #e3e3e3"></div>
<div class="" style="left:888px;top:132px;width:17px;height:17px;background:#f0f0f0;box-sizing:border-box;border-top:1px solid #fff;border-left:1px solid #fff;border-right:1px solid #696969;border-bottom:1px solid #696969"></div>
<div class="" style="left:889px;top:133px;width:15px;height:15px;box-sizing:border-box;border-top:1px solid #e3e3e3;border-left:1px solid #e3e3e3;border-right:1px solid #a0a0a0;border-bottom:1px solid #a0a0a0"></div>
<div class="" style="left:893px;top:139px;width:7px;height:1px;background:#000"></div>
<div class="" style="left:894px;top:140px;width:5px;height:1px;background:#000"></div>
<div class="" style="left:895px;top:141px;width:3px;height:1px;background:#000"></div>
<div class="" style="left:896px;top:142px;width:1px;height:1px;background:#000"></div>
<span class="t" style="left:781px;top:133px;width:105px;text-align:center;font-size:12px;color:#000;transform:scaleX(0.88);transform-origin:50% 0">12:00</span>
<span class="t" style="left:687px;top:161px;font-size:12px;color:#000;transform:scaleX(0.88);">LCD Beleuchtung:</span>
<div class="" style="left:809px;top:156px;width:99px;height:20px;background:#f0f0f0;box-sizing:border-box;border-top:1px solid #a0a0a0;border-left:1px solid #a0a0a0;border-right:1px solid #fff;border-bottom:1px solid #fff"></div>
<div class="" style="left:810px;top:157px;width:97px;height:18px;box-sizing:border-box;border-top:1px solid #696969;border-left:1px solid #696969;border-right:1px solid #e3e3e3;border-bottom:1px solid #e3e3e3"></div>
<div class="" style="left:889px;top:158px;width:17px;height:16px;background:#f0f0f0;box-sizing:border-box;border-top:1px solid #fff;border-left:1px solid #fff;border-right:1px solid #696969;border-bottom:1px solid #696969"></div>
<div class="" style="left:890px;top:159px;width:15px;height:14px;box-sizing:border-box;border-top:1px solid #e3e3e3;border-left:1px solid #e3e3e3;border-right:1px solid #a0a0a0;border-bottom:1px solid #a0a0a0"></div>
<div class="" style="left:894px;top:165px;width:7px;height:1px;background:#a0a0a0"></div>
<div class="" style="left:895px;top:166px;width:5px;height:1px;background:#a0a0a0"></div>
<div class="" style="left:896px;top:167px;width:3px;height:1px;background:#a0a0a0"></div>
<div class="" style="left:897px;top:168px;width:1px;height:1px;background:#a0a0a0"></div>
<span class="t" style="left:814px;top:159px;font-size:12px;color:#a0a0a0;transform:scaleX(0.88);">Auto 0-1</span>
<span class="t" style="left:687px;top:185px;font-size:12px;color:#000;transform:scaleX(0.9128);">Tastenbeleuchtung:</span>
<div class="" style="left:809px;top:182px;width:99px;height:20px;background:#f0f0f0;box-sizing:border-box;border-top:1px solid #a0a0a0;border-left:1px solid #a0a0a0;border-right:1px solid #fff;border-bottom:1px solid #fff"></div>
<div class="" style="left:810px;top:183px;width:97px;height:18px;box-sizing:border-box;border-top:1px solid #696969;border-left:1px solid #696969;border-right:1px solid #e3e3e3;border-bottom:1px solid #e3e3e3"></div>
<div class="" style="left:889px;top:184px;width:17px;height:16px;background:#f0f0f0;box-sizing:border-box;border-top:1px solid #fff;border-left:1px solid #fff;border-right:1px solid #696969;border-bottom:1px solid #696969"></div>
<div class="" style="left:890px;top:185px;width:15px;height:14px;box-sizing:border-box;border-top:1px solid #e3e3e3;border-left:1px solid #e3e3e3;border-right:1px solid #a0a0a0;border-bottom:1px solid #a0a0a0"></div>
<div class="" style="left:894px;top:191px;width:7px;height:1px;background:#a0a0a0"></div>
<div class="" style="left:895px;top:192px;width:5px;height:1px;background:#a0a0a0"></div>
<div class="" style="left:896px;top:193px;width:3px;height:1px;background:#a0a0a0"></div>
<div class="" style="left:897px;top:194px;width:1px;height:1px;background:#a0a0a0"></div>
<span class="t" style="left:814px;top:185px;font-size:12px;color:#a0a0a0;transform:scaleX(0.88);">fehlt</span>
<div class="" style="left:682px;top:217px;width:233px;height:25px;border:1px solid #fff;box-sizing:border-box"></div>
<div class="" style="left:681px;top:216px;width:233px;height:25px;border:1px solid #a0a0a0;box-sizing:border-box"></div>
<div class="" style="left:688px;top:216px;width:106px;height:2px;background:#f0f0f0"></div>
<span class="t" style="left:689px;top:211px;font-size:12px;color:#000;transform:scaleX(0.88);">Alarmmeldungen(Text)</span>
<div class="" style="left:723px;top:224px;width:13px;height:13px;background:#fff;box-sizing:border-box;border-top:1px solid #a0a0a0;border-left:1px solid #a0a0a0;border-right:1px solid #fff;border-bottom:1px solid #fff"></div>
<div class="" style="left:724px;top:225px;width:11px;height:11px;box-sizing:border-box;border-top:1px solid #696969;border-left:1px solid #696969;border-right:1px solid #e3e3e3;border-bottom:1px solid #e3e3e3"></div>
<span class="t" style="left:742px;top:224px;font-size:12px;color:#000;transform:scaleX(0.88);">Bereiche</span>
<div class="" style="left:811px;top:224px;width:13px;height:13px;background:#fff;box-sizing:border-box;border-top:1px solid #a0a0a0;border-left:1px solid #a0a0a0;border-right:1px solid #fff;border-bottom:1px solid #fff"></div>
<div class="" style="left:812px;top:225px;width:11px;height:11px;box-sizing:border-box;border-top:1px solid #696969;border-left:1px solid #696969;border-right:1px solid #e3e3e3;border-bottom:1px solid #e3e3e3"></div>
<svg class="a" style="left:814px;top:227px" width="7" height="7" viewBox="0 0 7 7"><path d="M0 2v3l2 2 5-5V-1L2 4z" fill="#000"/></svg>
<span class="t" style="left:829px;top:224px;font-size:12px;color:#000;transform:scaleX(0.88);">Linien</span>
<div class="" style="left:682px;top:247px;width:233px;height:37px;border:1px solid #fff;box-sizing:border-box"></div>
<div class="" style="left:681px;top:246px;width:233px;height:37px;border:1px solid #a0a0a0;box-sizing:border-box"></div>
<div class="" style="left:688px;top:246px;width:34px;height:2px;background:#f0f0f0"></div>
<span class="t" style="left:689px;top:241px;font-size:12px;color:#000;transform:scaleX(0.88);">Alarme</span>
<div class="" style="left:725px;top:253px;width:13px;height:13px;background:#fff;box-sizing:border-box;border-top:1px solid #a0a0a0;border-left:1px solid #a0a0a0;border-right:1px solid #fff;border-bottom:1px solid #fff"></div>
<div class="" style="left:726px;top:254px;width:11px;height:11px;box-sizing:border-box;border-top:1px solid #696969;border-left:1px solid #696969;border-right:1px solid #e3e3e3;border-bottom:1px solid #e3e3e3"></div>
<svg class="a" style="left:728px;top:256px" width="7" height="7" viewBox="0 0 7 7"><path d="M0 2v3l2 2 5-5V-1L2 4z" fill="#000"/></svg>
<span class="t" style="left:743px;top:252px;font-size:12px;color:#000;transform:scaleX(0.88);">Brand</span>
<div class="" style="left:725px;top:268px;width:13px;height:13px;background:#fff;box-sizing:border-box;border-top:1px solid #a0a0a0;border-left:1px solid #a0a0a0;border-right:1px solid #fff;border-bottom:1px solid #fff"></div>
<div class="" style="left:726px;top:269px;width:11px;height:11px;box-sizing:border-box;border-top:1px solid #696969;border-left:1px solid #696969;border-right:1px solid #e3e3e3;border-bottom:1px solid #e3e3e3"></div>
<svg class="a" style="left:728px;top:271px" width="7" height="7" viewBox="0 0 7 7"><path d="M0 2v3l2 2 5-5V-1L2 4z" fill="#000"/></svg>
<span class="t" style="left:743px;top:267px;font-size:12px;color:#000;transform:scaleX(0.88);">Notruf</span>
<div class="" style="left:812px;top:252px;width:13px;height:13px;background:#fff;box-sizing:border-box;border-top:1px solid #a0a0a0;border-left:1px solid #a0a0a0;border-right:1px solid #fff;border-bottom:1px solid #fff"></div>
<div class="" style="left:813px;top:253px;width:11px;height:11px;box-sizing:border-box;border-top:1px solid #696969;border-left:1px solid #696969;border-right:1px solid #e3e3e3;border-bottom:1px solid #e3e3e3"></div>
<svg class="a" style="left:815px;top:255px" width="7" height="7" viewBox="0 0 7 7"><path d="M0 2v3l2 2 5-5V-1L2 4z" fill="#000"/></svg>
<span class="t" style="left:830px;top:251px;font-size:12px;color:#000;transform:scaleX(0.88);">Überfall</span>
<div class="" style="left:812px;top:267px;width:13px;height:13px;background:#fff;box-sizing:border-box;border-top:1px solid #a0a0a0;border-left:1px solid #a0a0a0;border-right:1px solid #fff;border-bottom:1px solid #fff"></div>
<div class="" style="left:813px;top:268px;width:11px;height:11px;box-sizing:border-box;border-top:1px solid #696969;border-left:1px solid #696969;border-right:1px solid #e3e3e3;border-bottom:1px solid #e3e3e3"></div>
<span class="t" style="left:830px;top:266px;font-size:12px;color:#000;transform:scaleX(0.88);">3 f. Kennwörter</span>
<div class="" style="left:682px;top:291px;width:233px;height:279px;border:1px solid #fff;box-sizing:border-box"></div>
<div class="" style="left:681px;top:290px;width:233px;height:279px;border:1px solid #a0a0a0;box-sizing:border-box"></div>
<div class="" style="left:688px;top:290px;width:78px;height:2px;background:#f0f0f0"></div>
<span class="t" style="left:689px;top:285px;font-size:12px;color:#000;transform:scaleX(0.88);">Übrige Optionen</span>
<div class="" style="left:687px;top:299px;width:13px;height:13px;background:#fff;box-sizing:border-box;border-top:1px solid #a0a0a0;border-left:1px solid #a0a0a0;border-right:1px solid #fff;border-bottom:1px solid #fff"></div>
<div class="" style="left:688px;top:300px;width:11px;height:11px;box-sizing:border-box;border-top:1px solid #696969;border-left:1px solid #696969;border-right:1px solid #e3e3e3;border-bottom:1px solid #e3e3e3"></div>
<span class="t" style="left:705px;top:298px;font-size:12px;color:#000;transform:scaleX(0.8564);">Überfallalarm still</span>
<div class="" style="left:687px;top:315px;width:13px;height:13px;background:#f0f0f0;box-sizing:border-box;border-top:1px solid #a0a0a0;border-left:1px solid #a0a0a0;border-right:1px solid #fff;border-bottom:1px solid #fff"></div>
<div class="" style="left:688px;top:316px;width:11px;height:11px;box-sizing:border-box;border-top:1px solid #696969;border-left:1px solid #696969;border-right:1px solid #e3e3e3;border-bottom:1px solid #e3e3e3"></div>
<span class="t" style="left:705px;top:313px;font-size:12px;color:#a0a0a0;transform:scaleX(0.873);">Einganszeit signalisieren</span>
<div class="" style="left:687px;top:331px;width:13px;height:13px;background:#f0f0f0;box-sizing:border-box;border-top:1px solid #a0a0a0;border-left:1px solid #a0a0a0;border-right:1px solid #fff;border-bottom:1px solid #fff"></div>
<div class="" style="left:688px;top:332px;width:11px;height:11px;box-sizing:border-box;border-top:1px solid #696969;border-left:1px solid #696969;border-right:1px solid #e3e3e3;border-bottom:1px solid #e3e3e3"></div>
<span class="t" style="left:705px;top:329px;font-size:12px;color:#a0a0a0;transform:scaleX(0.8714);">Ausgangszeit signalisieren</span>
<div class="" style="left:687px;top:346px;width:13px;height:13px;background:#fff;box-sizing:border-box;border-top:1px solid #a0a0a0;border-left:1px solid #a0a0a0;border-right:1px solid #fff;border-bottom:1px solid #fff"></div>
<div class="" style="left:688px;top:347px;width:11px;height:11px;box-sizing:border-box;border-top:1px solid #696969;border-left:1px solid #696969;border-right:1px solid #e3e3e3;border-bottom:1px solid #e3e3e3"></div>
<svg class="a" style="left:690px;top:349px" width="7" height="7" viewBox="0 0 7 7"><path d="M0 2v3l2 2 5-5V-1L2 4z" fill="#000"/></svg>
<span class="t" style="left:705px;top:345px;font-size:12px;color:#000;transform:scaleX(0.8576);">Alarmsignalisierung</span>
<div class="" style="left:687px;top:361px;width:13px;height:13px;background:#fff;box-sizing:border-box;border-top:1px solid #a0a0a0;border-left:1px solid #a0a0a0;border-right:1px solid #fff;border-bottom:1px solid #fff"></div>
<div class="" style="left:688px;top:362px;width:11px;height:11px;box-sizing:border-box;border-top:1px solid #696969;border-left:1px solid #696969;border-right:1px solid #e3e3e3;border-bottom:1px solid #e3e3e3"></div>
<svg class="a" style="left:690px;top:364px" width="7" height="7" viewBox="0 0 7 7"><path d="M0 2v3l2 2 5-5V-1L2 4z" fill="#000"/></svg>
<span class="t" style="left:705px;top:360px;font-size:12px;color:#000;transform:scaleX(0.9379);">Tastenton</span>
<div class="" style="left:687px;top:377px;width:13px;height:13px;background:#fff;box-sizing:border-box;border-top:1px solid #a0a0a0;border-left:1px solid #a0a0a0;border-right:1px solid #fff;border-bottom:1px solid #fff"></div>
<div class="" style="left:688px;top:378px;width:11px;height:11px;box-sizing:border-box;border-top:1px solid #696969;border-left:1px solid #696969;border-right:1px solid #e3e3e3;border-bottom:1px solid #e3e3e3"></div>
<span class="t" style="left:705px;top:376px;font-size:12px;color:#000;transform:scaleX(0.8978);">Stör.Sign. bei Teilsch.</span>
<div class="" style="left:687px;top:393px;width:13px;height:13px;background:#fff;box-sizing:border-box;border-top:1px solid #a0a0a0;border-left:1px solid #a0a0a0;border-right:1px solid #fff;border-bottom:1px solid #fff"></div>
<div class="" style="left:688px;top:394px;width:11px;height:11px;box-sizing:border-box;border-top:1px solid #696969;border-left:1px solid #696969;border-right:1px solid #e3e3e3;border-bottom:1px solid #e3e3e3"></div>
<span class="t" style="left:705px;top:392px;font-size:12px;color:#000;transform:scaleX(0.8878);">Neue Störung sign.</span>
<div class="" style="left:687px;top:409px;width:13px;height:13px;background:#fff;box-sizing:border-box;border-top:1px solid #a0a0a0;border-left:1px solid #a0a0a0;border-right:1px solid #fff;border-bottom:1px solid #fff"></div>
<div class="" style="left:688px;top:410px;width:11px;height:11px;box-sizing:border-box;border-top:1px solid #696969;border-left:1px solid #696969;border-right:1px solid #e3e3e3;border-bottom:1px solid #e3e3e3"></div>
<svg class="a" style="left:690px;top:412px" width="7" height="7" viewBox="0 0 7 7"><path d="M0 2v3l2 2 5-5V-1L2 4z" fill="#000"/></svg>
<span class="t" style="left:705px;top:408px;font-size:12px;color:#000;transform:scaleX(0.8918);">Kennworteingabe zeigen</span>
<div class="" style="left:687px;top:425px;width:13px;height:13px;background:#f0f0f0;box-sizing:border-box;border-top:1px solid #a0a0a0;border-left:1px solid #a0a0a0;border-right:1px solid #fff;border-bottom:1px solid #fff"></div>
<div class="" style="left:688px;top:426px;width:11px;height:11px;box-sizing:border-box;border-top:1px solid #696969;border-left:1px solid #696969;border-right:1px solid #e3e3e3;border-bottom:1px solid #e3e3e3"></div>
<span class="t" style="left:705px;top:423px;font-size:12px;color:#a0a0a0;transform:scaleX(0.8797);">Bedienteilname zeigen</span>
<div class="" style="left:687px;top:440px;width:13px;height:13px;background:#fff;box-sizing:border-box;border-top:1px solid #a0a0a0;border-left:1px solid #a0a0a0;border-right:1px solid #fff;border-bottom:1px solid #fff"></div>
<div class="" style="left:688px;top:441px;width:11px;height:11px;box-sizing:border-box;border-top:1px solid #696969;border-left:1px solid #696969;border-right:1px solid #e3e3e3;border-bottom:1px solid #e3e3e3"></div>
<svg class="a" style="left:690px;top:443px" width="7" height="7" viewBox="0 0 7 7"><path d="M0 2v3l2 2 5-5V-1L2 4z" fill="#000"/></svg>
<span class="t" style="left:705px;top:439px;font-size:12px;color:#000;transform:scaleX(0.8832);">Ausgangszeitkürzung möglich</span>
<div class="" style="left:687px;top:456px;width:13px;height:13px;background:#fff;box-sizing:border-box;border-top:1px solid #a0a0a0;border-left:1px solid #a0a0a0;border-right:1px solid #fff;border-bottom:1px solid #fff"></div>
<div class="" style="left:688px;top:457px;width:11px;height:11px;box-sizing:border-box;border-top:1px solid #696969;border-left:1px solid #696969;border-right:1px solid #e3e3e3;border-bottom:1px solid #e3e3e3"></div>
<span class="t" style="left:705px;top:455px;font-size:12px;color:#000;transform:scaleX(0.8851);">Verl. der Linien zeigen</span>
<div class="" style="left:687px;top:472px;width:13px;height:13px;background:#fff;box-sizing:border-box;border-top:1px solid #a0a0a0;border-left:1px solid #a0a0a0;border-right:1px solid #fff;border-bottom:1px solid #fff"></div>
<div class="" style="left:688px;top:473px;width:11px;height:11px;box-sizing:border-box;border-top:1px solid #696969;border-left:1px solid #696969;border-right:1px solid #e3e3e3;border-bottom:1px solid #e3e3e3"></div>
<svg class="a" style="left:690px;top:475px" width="7" height="7" viewBox="0 0 7 7"><path d="M0 2v3l2 2 5-5V-1L2 4z" fill="#000"/></svg>
<span class="t" style="left:705px;top:471px;font-size:12px;color:#000;transform:scaleX(0.8905);">Verzög. Autoscharf. sign.</span>
<div class="" style="left:687px;top:488px;width:13px;height:13px;background:#f0f0f0;box-sizing:border-box;border-top:1px solid #a0a0a0;border-left:1px solid #a0a0a0;border-right:1px solid #fff;border-bottom:1px solid #fff"></div>
<div class="" style="left:688px;top:489px;width:11px;height:11px;box-sizing:border-box;border-top:1px solid #696969;border-left:1px solid #696969;border-right:1px solid #e3e3e3;border-bottom:1px solid #e3e3e3"></div>
<span class="t" style="left:705px;top:486px;font-size:12px;color:#a0a0a0;transform:scaleX(0.8934);">Auswahl des Anz.Modus</span>
<div class="" style="left:687px;top:503px;width:13px;height:13px;background:#fff;box-sizing:border-box;border-top:1px solid #a0a0a0;border-left:1px solid #a0a0a0;border-right:1px solid #fff;border-bottom:1px solid #fff"></div>
<div class="" style="left:688px;top:504px;width:11px;height:11px;box-sizing:border-box;border-top:1px solid #696969;border-left:1px solid #696969;border-right:1px solid #e3e3e3;border-bottom:1px solid #e3e3e3"></div>
<span class="t" style="left:705px;top:502px;font-size:12px;color:#000;transform:scaleX(0.8885);">Unscharfmeldungen zeigen</span>
<div class="" style="left:687px;top:519px;width:13px;height:13px;background:#fff;box-sizing:border-box;border-top:1px solid #a0a0a0;border-left:1px solid #a0a0a0;border-right:1px solid #fff;border-bottom:1px solid #fff"></div>
<div class="" style="left:688px;top:520px;width:11px;height:11px;box-sizing:border-box;border-top:1px solid #696969;border-left:1px solid #696969;border-right:1px solid #e3e3e3;border-bottom:1px solid #e3e3e3"></div>
<svg class="a" style="left:690px;top:522px" width="7" height="7" viewBox="0 0 7 7"><path d="M0 2v3l2 2 5-5V-1L2 4z" fill="#000"/></svg>
<span class="t" style="left:705px;top:518px;font-size:12px;color:#000;transform:scaleX(0.8995);">Meldungen Scharschalten</span>
<div class="" style="left:687px;top:536px;width:13px;height:13px;background:#f0f0f0;box-sizing:border-box;border-top:1px solid #a0a0a0;border-left:1px solid #a0a0a0;border-right:1px solid #fff;border-bottom:1px solid #fff"></div>
<div class="" style="left:688px;top:537px;width:11px;height:11px;box-sizing:border-box;border-top:1px solid #696969;border-left:1px solid #696969;border-right:1px solid #e3e3e3;border-bottom:1px solid #e3e3e3"></div>
<span class="t" style="left:706px;top:535px;font-size:12px;color:#a0a0a0;font-weight:700;transform:scaleX(0.9593);">RS-Kommunikation</span>
<div class="" style="left:687px;top:552px;width:13px;height:13px;background:#fff;box-sizing:border-box;border-top:1px solid #a0a0a0;border-left:1px solid #a0a0a0;border-right:1px solid #fff;border-bottom:1px solid #fff"></div>
<div class="" style="left:688px;top:553px;width:11px;height:11px;box-sizing:border-box;border-top:1px solid #696969;border-left:1px solid #696969;border-right:1px solid #e3e3e3;border-bottom:1px solid #e3e3e3"></div>
<span class="t" style="left:705px;top:551px;font-size:12px;color:#000;transform:scaleX(0.8956);">Schnelle Steuerung</span>
<div class="" style="left:421px;top:727px;width:254px;height:37px;border:1px solid #fff;box-sizing:border-box"></div>
<div class="" style="left:420px;top:726px;width:254px;height:37px;border:1px solid #a0a0a0;box-sizing:border-box"></div>
<div class="" style="left:427px;top:726px;width:101px;height:2px;background:#f0f0f0"></div>
<span class="t" style="left:428px;top:721px;font-size:12px;color:#000;transform:scaleX(0.9211);">Linie113: "Linie 113"</span>
<svg class="a" style="left:429px;top:735px" width="12" height="12" viewBox="0 0 12 12"><circle cx="6" cy="6" r="5.5" fill="#fff"/><path d="M1.8 10.2A5.9 5.9 0 0 1 10.2 1.8" fill="none" stroke="#a0a0a0" stroke-width="1"/><path d="M2.6 9.4A4.8 4.8 0 0 1 9.4 2.6" fill="none" stroke="#696969" stroke-width="1"/><path d="M10.2 1.8A5.9 5.9 0 0 1 1.8 10.2" fill="none" stroke="#fff" stroke-width="1"/><path d="M9.4 2.6A4.8 4.8 0 0 1 2.6 9.4" fill="none" stroke="#e3e3e3" stroke-width="1"/></svg>
<span class="t" style="left:446px;top:734px;font-size:12px;color:#000;transform:scaleX(0.88);">im LCD-Bedienteil</span>
<svg class="a" style="left:429px;top:747px" width="12" height="12" viewBox="0 0 12 12"><circle cx="6" cy="6" r="5.5" fill="#fff"/><path d="M1.8 10.2A5.9 5.9 0 0 1 10.2 1.8" fill="none" stroke="#a0a0a0" stroke-width="1"/><path d="M2.6 9.4A4.8 4.8 0 0 1 9.4 2.6" fill="none" stroke="#696969" stroke-width="1"/><path d="M10.2 1.8A5.9 5.9 0 0 1 1.8 10.2" fill="none" stroke="#fff" stroke-width="1"/><path d="M9.4 2.6A4.8 4.8 0 0 1 2.6 9.4" fill="none" stroke="#e3e3e3" stroke-width="1"/><circle cx="6" cy="6" r="2" fill="#000"/></svg>
<span class="t" style="left:446px;top:746px;font-size:12px;color:#000;transform:scaleX(0.88);">Nicht belegt</span>
<div class="" style="left:682px;top:727px;width:233px;height:37px;border:1px solid #fff;box-sizing:border-box"></div>
<div class="" style="left:681px;top:726px;width:233px;height:37px;border:1px solid #a0a0a0;box-sizing:border-box"></div>
<div class="" style="left:688px;top:726px;width:101px;height:2px;background:#f0f0f0"></div>
<span class="t" style="left:689px;top:721px;font-size:12px;color:#000;transform:scaleX(0.9211);">Linie114: "Linie 114"</span>
<svg class="a" style="left:691px;top:735px" width="12" height="12" viewBox="0 0 12 12"><circle cx="6" cy="6" r="5.5" fill="#fff"/><path d="M1.8 10.2A5.9 5.9 0 0 1 10.2 1.8" fill="none" stroke="#a0a0a0" stroke-width="1"/><path d="M2.6 9.4A4.8 4.8 0 0 1 9.4 2.6" fill="none" stroke="#696969" stroke-width="1"/><path d="M10.2 1.8A5.9 5.9 0 0 1 1.8 10.2" fill="none" stroke="#fff" stroke-width="1"/><path d="M9.4 2.6A4.8 4.8 0 0 1 2.6 9.4" fill="none" stroke="#e3e3e3" stroke-width="1"/></svg>
<span class="t" style="left:707px;top:734px;font-size:12px;color:#000;transform:scaleX(0.88);">im LCD-Bedienteil</span>
<svg class="a" style="left:691px;top:747px" width="12" height="12" viewBox="0 0 12 12"><circle cx="6" cy="6" r="5.5" fill="#fff"/><path d="M1.8 10.2A5.9 5.9 0 0 1 10.2 1.8" fill="none" stroke="#a0a0a0" stroke-width="1"/><path d="M2.6 9.4A4.8 4.8 0 0 1 9.4 2.6" fill="none" stroke="#696969" stroke-width="1"/><path d="M10.2 1.8A5.9 5.9 0 0 1 1.8 10.2" fill="none" stroke="#fff" stroke-width="1"/><path d="M9.4 2.6A4.8 4.8 0 0 1 2.6 9.4" fill="none" stroke="#e3e3e3" stroke-width="1"/><circle cx="6" cy="6" r="2" fill="#000"/></svg>
<span class="t" style="left:707px;top:746px;font-size:12px;color:#000;transform:scaleX(0.88);">Nicht belegt</span>
<div class="" style="left:421px;top:767px;width:494px;height:29px;border:1px solid #fff;box-sizing:border-box"></div>
<div class="" style="left:420px;top:766px;width:494px;height:29px;border:1px solid #a0a0a0;box-sizing:border-box"></div>
<div class="" style="left:427px;top:766px;width:137px;height:2px;background:#f0f0f0"></div>
<span class="t" style="left:428px;top:763px;font-size:12px;color:#000;transform:scaleX(0.8967);">Autohintergrundbeleuchtung</span>
<svg class="a" style="left:426px;top:776px" width="12" height="12" viewBox="0 0 12 12"><circle cx="6" cy="6" r="5.5" fill="#fff"/><path d="M1.8 10.2A5.9 5.9 0 0 1 10.2 1.8" fill="none" stroke="#a0a0a0" stroke-width="1"/><path d="M2.6 9.4A4.8 4.8 0 0 1 9.4 2.6" fill="none" stroke="#696969" stroke-width="1"/><path d="M10.2 1.8A5.9 5.9 0 0 1 1.8 10.2" fill="none" stroke="#fff" stroke-width="1"/><path d="M9.4 2.6A4.8 4.8 0 0 1 2.6 9.4" fill="none" stroke="#e3e3e3" stroke-width="1"/></svg>
<span class="t" style="left:443px;top:777px;font-size:12px;color:#000;transform:scaleX(0.88);">Eingangszeit im Bereich:</span>
<div class="" style="left:579px;top:770px;width:34px;height:22px;background:#fff;box-sizing:border-box;border-top:1px solid #a0a0a0;border-left:1px solid #a0a0a0;border-right:1px solid #fff;border-bottom:1px solid #fff"></div>
<div class="" style="left:580px;top:771px;width:32px;height:20px;box-sizing:border-box;border-top:1px solid #696969;border-left:1px solid #696969;border-right:1px solid #e3e3e3;border-bottom:1px solid #e3e3e3"></div>
<div class="" style="left:596px;top:772px;width:15px;height:9px;background:#f0f0f0;box-sizing:border-box;border-top:1px solid #fff;border-left:1px solid #fff;border-right:1px solid #696969;border-bottom:1px solid #696969"></div>
<div class="" style="left:597px;top:773px;width:13px;height:7px;box-sizing:border-box;border-top:1px solid #e3e3e3;border-left:1px solid #e3e3e3;border-right:1px solid #a0a0a0;border-bottom:1px solid #a0a0a0"></div>
<div class="" style="left:596px;top:781px;width:15px;height:9px;background:#f0f0f0;box-sizing:border-box;border-top:1px solid #fff;border-left:1px solid #fff;border-right:1px solid #696969;border-bottom:1px solid #696969"></div>
<div class="" style="left:597px;top:782px;width:13px;height:7px;box-sizing:border-box;border-top:1px solid #e3e3e3;border-left:1px solid #e3e3e3;border-right:1px solid #a0a0a0;border-bottom:1px solid #a0a0a0"></div>
<div class="" style="left:603px;top:774px;width:1px;height:1px;background:#000"></div>
<div class="" style="left:602px;top:775px;width:3px;height:1px;background:#000"></div>
<div class="" style="left:601px;top:776px;width:5px;height:1px;background:#000"></div>
<div class="" style="left:600px;top:777px;width:7px;height:1px;background:#000"></div>
<div class="" style="left:600px;top:783px;width:7px;height:1px;background:#000"></div>
<div class="" style="left:601px;top:784px;width:5px;height:1px;background:#000"></div>
<div class="" style="left:602px;top:785px;width:3px;height:1px;background:#000"></div>
<div class="" style="left:603px;top:786px;width:1px;height:1px;background:#000"></div>
<span class="t" style="left:583px;top:773px;font-size:12px;color:#a0a0a0;transform:scaleX(0.88);">1</span>
<svg class="a" style="left:635px;top:777px" width="12" height="12" viewBox="0 0 12 12"><circle cx="6" cy="6" r="5.5" fill="#fff"/><path d="M1.8 10.2A5.9 5.9 0 0 1 10.2 1.8" fill="none" stroke="#a0a0a0" stroke-width="1"/><path d="M2.6 9.4A4.8 4.8 0 0 1 9.4 2.6" fill="none" stroke="#696969" stroke-width="1"/><path d="M10.2 1.8A5.9 5.9 0 0 1 1.8 10.2" fill="none" stroke="#fff" stroke-width="1"/><path d="M9.4 2.6A4.8 4.8 0 0 1 2.6 9.4" fill="none" stroke="#e3e3e3" stroke-width="1"/><circle cx="6" cy="6" r="2" fill="#000"/></svg>
<span class="t" style="left:651px;top:777px;font-size:12px;color:#000;transform:scaleX(0.88);">Linienverletzung:</span>
<div class="" style="left:743px;top:770px;width:43px;height:22px;background:#fff;box-sizing:border-box;border-top:1px solid #a0a0a0;border-left:1px solid #a0a0a0;border-right:1px solid #fff;border-bottom:1px solid #fff"></div>
<div class="" style="left:744px;top:771px;width:41px;height:20px;box-sizing:border-box;border-top:1px solid #696969;border-left:1px solid #696969;border-right:1px solid #e3e3e3;border-bottom:1px solid #e3e3e3"></div>
<div class="" style="left:769px;top:772px;width:15px;height:9px;background:#f0f0f0;box-sizing:border-box;border-top:1px solid #fff;border-left:1px solid #fff;border-right:1px solid #696969;border-bottom:1px solid #696969"></div>
<div class="" style="left:770px;top:773px;width:13px;height:7px;box-sizing:border-box;border-top:1px solid #e3e3e3;border-left:1px solid #e3e3e3;border-right:1px solid #a0a0a0;border-bottom:1px solid #a0a0a0"></div>
<div class="" style="left:769px;top:781px;width:15px;height:9px;background:#f0f0f0;box-sizing:border-box;border-top:1px solid #fff;border-left:1px solid #fff;border-right:1px solid #696969;border-bottom:1px solid #696969"></div>
<div class="" style="left:770px;top:782px;width:13px;height:7px;box-sizing:border-box;border-top:1px solid #e3e3e3;border-left:1px solid #e3e3e3;border-right:1px solid #a0a0a0;border-bottom:1px solid #a0a0a0"></div>
<div class="" style="left:776px;top:774px;width:1px;height:1px;background:#000"></div>
<div class="" style="left:775px;top:775px;width:3px;height:1px;background:#000"></div>
<div class="" style="left:774px;top:776px;width:5px;height:1px;background:#000"></div>
<div class="" style="left:773px;top:777px;width:7px;height:1px;background:#000"></div>
<div class="" style="left:773px;top:783px;width:7px;height:1px;background:#000"></div>
<div class="" style="left:774px;top:784px;width:5px;height:1px;background:#000"></div>
<div class="" style="left:775px;top:785px;width:3px;height:1px;background:#000"></div>
<div class="" style="left:776px;top:786px;width:1px;height:1px;background:#000"></div>
<span class="t" style="left:747px;top:773px;font-size:12px;color:#000;transform:scaleX(0.88);">28</span>
<svg class="a" style="left:810px;top:774px" width="12" height="12" viewBox="0 0 12 12"><circle cx="6" cy="6" r="5.5" fill="#fff"/><path d="M1.8 10.2A5.9 5.9 0 0 1 10.2 1.8" fill="none" stroke="#a0a0a0" stroke-width="1"/><path d="M2.6 9.4A4.8 4.8 0 0 1 9.4 2.6" fill="none" stroke="#696969" stroke-width="1"/><path d="M10.2 1.8A5.9 5.9 0 0 1 1.8 10.2" fill="none" stroke="#fff" stroke-width="1"/><path d="M9.4 2.6A4.8 4.8 0 0 1 2.6 9.4" fill="none" stroke="#e3e3e3" stroke-width="1"/></svg>
<span class="t" style="left:828px;top:775px;font-size:12px;color:#000;transform:scaleX(0.88);">Keine</span>
<div class="" style="left:421px;top:799px;width:494px;height:33px;border:1px solid #fff;box-sizing:border-box"></div>
<div class="" style="left:420px;top:798px;width:494px;height:33px;border:1px solid #a0a0a0;box-sizing:border-box"></div>
<span class="t" style="left:432px;top:808px;font-size:12px;color:#000;transform:scaleX(0.9348);">Aufwachen</span>
<div class="" style="left:515px;top:803px;width:174px;height:21px;background:#fff;box-sizing:border-box;border-top:1px solid #a0a0a0;border-left:1px solid #a0a0a0;border-right:1px solid #fff;border-bottom:1px solid #fff"></div>
<div class="" style="left:516px;top:804px;width:172px;height:19px;box-sizing:border-box;border-top:1px solid #696969;border-left:1px solid #696969;border-right:1px solid #e3e3e3;border-bottom:1px solid #e3e3e3"></div>
<div class="" style="left:670px;top:805px;width:17px;height:17px;background:#f0f0f0;box-sizing:border-box;border-top:1px solid #fff;border-left:1px solid #fff;border-right:1px solid #696969;border-bottom:1px solid #696969"></div>
<div class="" style="left:671px;top:806px;width:15px;height:15px;box-sizing:border-box;border-top:1px solid #e3e3e3;border-left:1px solid #e3e3e3;border-right:1px solid #a0a0a0;border-bottom:1px solid #a0a0a0"></div>
<div class="" style="left:675px;top:812px;width:7px;height:1px;background:#000"></div>
<div class="" style="left:676px;top:813px;width:5px;height:1px;background:#000"></div>
<div class="" style="left:677px;top:814px;width:3px;height:1px;background:#000"></div>
<div class="" style="left:678px;top:815px;width:1px;height:1px;background:#000"></div>
<span class="t" style="left:519.5px;top:807px;font-size:12px;color:#000;transform:scaleX(0.88);">Statusanzeige</span>
<div class="" style="left:758px;top:808px;width:13px;height:13px;background:#fff;box-sizing:border-box;border-top:1px solid #a0a0a0;border-left:1px solid #a0a0a0;border-right:1px solid #fff;border-bottom:1px solid #fff"></div>
<div class="" style="left:759px;top:809px;width:11px;height:11px;box-sizing:border-box;border-top:1px solid #696969;border-left:1px solid #696969;border-right:1px solid #e3e3e3;border-bottom:1px solid #e3e3e3"></div>
<span class="t" style="left:776px;top:807px;font-size:12px;color:#000;transform:scaleX(0.88);">Photo Frame</span>
<div class="" style="left:421px;top:835px;width:357px;height:32px;border:1px solid #fff;box-sizing:border-box"></div>
<div class="" style="left:420px;top:834px;width:357px;height:32px;border:1px solid #a0a0a0;box-sizing:border-box"></div>
<span class="t" style="left:426px;top:842px;font-size:12px;color:#000;transform:scaleX(0.8612);">Sabot. alarmiert im Bereich:</span>
<div class="" style="left:600px;top:839px;width:162px;height:21px;background:#fff;box-sizing:border-box;border-top:1px solid #a0a0a0;border-left:1px solid #a0a0a0;border-right:1px solid #fff;border-bottom:1px solid #fff"></div>
<div class="" style="left:601px;top:840px;width:160px;height:19px;box-sizing:border-box;border-top:1px solid #696969;border-left:1px solid #696969;border-right:1px solid #e3e3e3;border-bottom:1px solid #e3e3e3"></div>
<div class="" style="left:743px;top:841px;width:17px;height:17px;background:#f0f0f0;box-sizing:border-box;border-top:1px solid #fff;border-left:1px solid #fff;border-right:1px solid #696969;border-bottom:1px solid #696969"></div>
<div class="" style="left:744px;top:842px;width:15px;height:15px;box-sizing:border-box;border-top:1px solid #e3e3e3;border-left:1px solid #e3e3e3;border-right:1px solid #a0a0a0;border-bottom:1px solid #a0a0a0"></div>
<div class="" style="left:748px;top:848px;width:7px;height:1px;background:#000"></div>
<div class="" style="left:749px;top:849px;width:5px;height:1px;background:#000"></div>
<div class="" style="left:750px;top:850px;width:3px;height:1px;background:#000"></div>
<div class="" style="left:751px;top:851px;width:1px;height:1px;background:#000"></div>
<span class="t" style="left:605px;top:842px;font-size:12px;color:#000;transform:scaleX(0.88);">1: Haus</span>
<div class="" style="left:786px;top:835px;width:126px;height:32px;background:#f0f0f0;box-sizing:border-box;border-top:1px solid #fff;border-left:1px solid #fff;border-right:1px solid #696969;border-bottom:1px solid #696969"></div>
<div class="" style="left:787px;top:836px;width:124px;height:30px;box-sizing:border-box;border-top:1px solid #e3e3e3;border-left:1px solid #e3e3e3;border-right:1px solid #a0a0a0;border-bottom:1px solid #a0a0a0"></div>
<span class="t" style="left:839px;top:844px;font-size:12px;color:#000;transform:scaleX(0.88);">Kopieren</span>
<svg class="a" style="left:819px;top:844px" width="16" height="13" viewBox="0 0 16 13" shape-rendering="crispEdges"><path d="M0.500 0.500h5l2 2v7h-7z" fill="#fff" stroke="#000"/><path d="M5.500 0.500v2h2" fill="none" stroke="#000"/><path d="M2 3.500h3M2 5.500h4M2 7.500h4" stroke="#2020c0"/><path d="M6.500 3.500h5l3 3v6h-8z" fill="#fff" stroke="#000"/><path d="M11.500 3.500v3h3" fill="none" stroke="#000"/><path d="M8 6.500h3M8 8.500h5M8 10.500h5" stroke="#2020c0"/></svg>
<div class="" style="left:412px;top:893px;width:555px;height:1px;background:#a0a0a0"></div>
<div class="" style="left:412px;top:894px;width:555px;height:1px;background:#fff"></div>
<span class="t" style="left:420px;top:901px;font-size:12px;color:#000;transform:scaleX(0.88);">Kommentar:</span>
<div class="" style="left:485px;top:897px;width:474px;height:20px;background:#fff;box-sizing:border-box;border-top:1px solid #a0a0a0;border-left:1px solid #a0a0a0;border-right:1px solid #fff;border-bottom:1px solid #fff"></div>
<div class="" style="left:486px;top:898px;width:472px;height:18px;box-sizing:border-box;border-top:1px solid #696969;border-left:1px solid #696969;border-right:1px solid #e3e3e3;border-bottom:1px solid #e3e3e3"></div>
</div></body></html>
